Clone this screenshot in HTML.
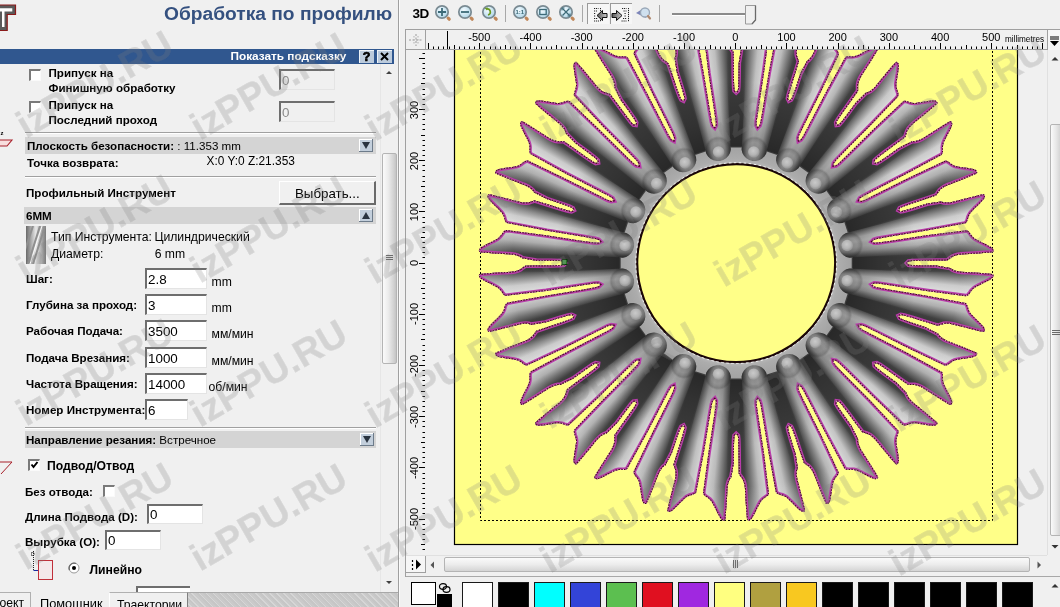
<!DOCTYPE html><html><head><meta charset="utf-8"><style>
html,body{margin:0;padding:0;width:1060px;height:607px;overflow:hidden;background:#f0f0f0;position:relative;font-family:"Liberation Sans",sans-serif;}
.t{position:absolute;white-space:nowrap;line-height:1;}
</style></head><body>
<svg style="position:absolute;left:0;top:0" width="20" height="34"><path d="M-2 5 H15.5 V14.5 H7.2 V30.5 H-2 Z" fill="#5a5a5a" stroke="#8a1a1a" stroke-width="1.2"/><path d="M-2 8.2 H12.3 V11.5 H4.5 V27 H2 V11.5 H-2 Z" fill="#fff"/></svg>
<div class="t" style="left:164px;top:4.2px;font-size:19.2px;font-weight:bold;color:#34507f;">Обработка по профилю</div>
<div style="position:absolute;left:0px;top:49px;width:394px;height:15px;background:#30578f"></div>
<div class="t" style="left:230.5px;top:51.3px;font-size:11.8px;font-weight:bold;color:#fff;">Показать подсказку</div>
<div style="position:absolute;left:359px;top:50px;width:15px;height:13px;background:#bccbdc;box-shadow:inset 1px 1px 0 #eef3f8"></div>
<div class="t" style="left:362.8px;top:50.9px;font-size:12.5px;font-weight:bold;color:#000;-webkit-text-stroke:0.7px #000">?</div>
<div style="position:absolute;left:377px;top:50px;width:15px;height:13px;background:#bccbdc;box-shadow:inset 1px 1px 0 #eef3f8"></div>
<svg style="position:absolute;left:377px;top:50px" width="15" height="13"><path d="M4 3 L11 10 M11 3 L4 10" stroke="#000" stroke-width="2"/></svg>
<div style="position:absolute;left:29px;top:69px;width:9px;height:9px;background:#fff;border-top:2px solid #7a7a7a;border-left:2px solid #7a7a7a;border-right:1px solid #fafafa;border-bottom:1px solid #fafafa;"></div>
<div class="t" style="left:48.5px;top:67.2px;font-size:11.6px;font-weight:bold;color:#000;">Припуск на</div>
<div class="t" style="left:48.5px;top:81.7px;font-size:11.6px;font-weight:bold;color:#000;">Финишную обработку</div>
<div style="position:absolute;left:279px;top:69px;width:53px;height:18px;background:#f0f0f0;border-top:2px solid #6e6e6e;border-left:2px solid #6e6e6e;border-right:1px solid #e4e4e4;border-bottom:1px solid #e4e4e4;"></div>
<div class="t" style="left:282px;top:73.7px;font-size:13.4px;font-weight:normal;color:#8a8a8a;">0</div>
<div style="position:absolute;left:29px;top:101px;width:9px;height:9px;background:#fff;border-top:2px solid #7a7a7a;border-left:2px solid #7a7a7a;border-right:1px solid #fafafa;border-bottom:1px solid #fafafa;"></div>
<div class="t" style="left:48.5px;top:99.2px;font-size:11.6px;font-weight:bold;color:#000;">Припуск на</div>
<div class="t" style="left:48.5px;top:114.2px;font-size:11.6px;font-weight:bold;color:#000;">Последний проход</div>
<div style="position:absolute;left:279px;top:101px;width:53px;height:18px;background:#f0f0f0;border-top:2px solid #6e6e6e;border-left:2px solid #6e6e6e;border-right:1px solid #e4e4e4;border-bottom:1px solid #e4e4e4;"></div>
<div class="t" style="left:282px;top:105.7px;font-size:13.4px;font-weight:normal;color:#8a8a8a;">0</div>
<div style="position:absolute;left:25px;top:132px;width:351px;height:1px;background:#a0a0a0;box-shadow:0 1px 0 #fff"></div>
<div style="position:absolute;left:25px;top:137px;width:351px;height:17px;background:#d4d4d4"></div>
<div class="t" style="left:27px;top:140.2px;font-size:11.6px;font-weight:bold;color:#000;">Плоскость безопасности: <span style="font-weight:normal">: 11.353 mm</span></div>
<div style="position:absolute;left:359px;top:139px;width:14px;height:13px;background:#c3cfdc;border-right:1px solid #6d7b8a;border-bottom:1px solid #6d7b8a;box-sizing:border-box;box-shadow:inset 1px 1px 0 #fff"></div>
<svg style="position:absolute;left:359px;top:139px" width="14" height="13"><path d="M3 3 L11 3 L7 10 Z" fill="#2a3440"/></svg>
<div class="t" style="left:27px;top:156.7px;font-size:11.6px;font-weight:bold;color:#000;">Точка возврата:</div>
<div class="t" style="left:206.5px;top:156.4px;font-size:11.9px;font-weight:normal;color:#000;">X:0 Y:0 Z:21.353</div>
<div style="position:absolute;left:25px;top:176px;width:351px;height:1px;background:#a0a0a0;box-shadow:0 1px 0 #fff"></div>
<div class="t" style="left:26px;top:187.2px;font-size:11.6px;font-weight:bold;color:#000;">Профильный Инструмент</div>
<div style="position:absolute;left:279px;top:181px;width:97px;height:24px;background:#f0f0f0;border-top:1px solid #fff;border-left:1px solid #fff;border-right:2px solid #6a6a6a;border-bottom:2px solid #6a6a6a;box-sizing:border-box"></div>
<div class="t" style="left:295px;top:187.2px;font-size:13.3px;font-weight:normal;color:#000;">Выбрать...</div>
<div style="position:absolute;left:24px;top:207px;width:352px;height:17px;background:#d4d4d4"></div>
<div class="t" style="left:26px;top:209.9px;font-size:11.6px;font-weight:bold;color:#000;">6MM</div>
<div style="position:absolute;left:359px;top:209px;width:14px;height:13px;background:#c3cfdc;border-right:1px solid #6d7b8a;border-bottom:1px solid #6d7b8a;box-sizing:border-box;box-shadow:inset 1px 1px 0 #fff"></div>
<svg style="position:absolute;left:359px;top:209px" width="14" height="13"><path d="M3 10 L7 3 L11 10 Z" fill="#2a3440"/></svg>
<svg style="position:absolute;left:26px;top:226px" width="20" height="38"><defs><linearGradient id="tg" x1="0" x2="1"><stop offset="0" stop-color="#6a6a6a"/><stop offset="0.5" stop-color="#e8e8e8"/><stop offset="1" stop-color="#7a7a7a"/></linearGradient></defs><rect width="20" height="38" fill="url(#tg)"/><path d="M2 38 L14 0 M7 38 L19 0 M-3 30 L7 0" stroke="#909090" stroke-width="2"/><path d="M4 38 L16 0" stroke="#fafafa" stroke-width="1"/></svg>
<div class="t" style="left:51px;top:230.5px;font-size:12.2px;font-weight:normal;color:#000;">Тип Инструмента:</div>
<div class="t" style="left:154.4px;top:230.5px;font-size:12.2px;font-weight:normal;color:#000;">Цилиндрический</div>
<div class="t" style="left:51px;top:247.5px;font-size:12.2px;font-weight:normal;color:#000;">Диаметр:</div>
<div class="t" style="left:154.7px;top:247.5px;font-size:12.2px;font-weight:normal;color:#000;">6 mm</div>
<div class="t" style="left:26px;top:273.2px;font-size:11.6px;font-weight:bold;color:#000;">Шаг:</div>
<div style="position:absolute;left:145px;top:268px;width:59px;height:18px;background:#fff;border-top:2px solid #6e6e6e;border-left:2px solid #6e6e6e;border-right:1px solid #e4e4e4;border-bottom:1px solid #e4e4e4;"></div>
<div class="t" style="left:148px;top:272.7px;font-size:13.4px;font-weight:normal;color:#000;">2.8</div>
<div class="t" style="left:211.5px;top:275.7px;font-size:12.2px;font-weight:normal;color:#000;">mm</div>
<div class="t" style="left:26px;top:299.2px;font-size:11.6px;font-weight:bold;color:#000;">Глубина за проход:</div>
<div style="position:absolute;left:145px;top:294px;width:59px;height:18px;background:#fff;border-top:2px solid #6e6e6e;border-left:2px solid #6e6e6e;border-right:1px solid #e4e4e4;border-bottom:1px solid #e4e4e4;"></div>
<div class="t" style="left:148px;top:298.7px;font-size:13.4px;font-weight:normal;color:#000;">3</div>
<div class="t" style="left:211.5px;top:301.7px;font-size:12.2px;font-weight:normal;color:#000;">mm</div>
<div class="t" style="left:26px;top:325.2px;font-size:11.6px;font-weight:bold;color:#000;">Рабочая Подача:</div>
<div style="position:absolute;left:145px;top:320px;width:59px;height:18px;background:#fff;border-top:2px solid #6e6e6e;border-left:2px solid #6e6e6e;border-right:1px solid #e4e4e4;border-bottom:1px solid #e4e4e4;"></div>
<div class="t" style="left:148px;top:324.7px;font-size:13.4px;font-weight:normal;color:#000;">3500</div>
<div class="t" style="left:211.5px;top:327.7px;font-size:12.2px;font-weight:normal;color:#000;">мм/мин</div>
<div class="t" style="left:26px;top:352.2px;font-size:11.6px;font-weight:bold;color:#000;">Подача Врезания:</div>
<div style="position:absolute;left:145px;top:347px;width:59px;height:18px;background:#fff;border-top:2px solid #6e6e6e;border-left:2px solid #6e6e6e;border-right:1px solid #e4e4e4;border-bottom:1px solid #e4e4e4;"></div>
<div class="t" style="left:148px;top:351.7px;font-size:13.4px;font-weight:normal;color:#000;">1000</div>
<div class="t" style="left:211.5px;top:354.7px;font-size:12.2px;font-weight:normal;color:#000;">мм/мин</div>
<div class="t" style="left:26px;top:378.2px;font-size:11.6px;font-weight:bold;color:#000;">Частота Вращения:</div>
<div style="position:absolute;left:145px;top:373px;width:59px;height:18px;background:#fff;border-top:2px solid #6e6e6e;border-left:2px solid #6e6e6e;border-right:1px solid #e4e4e4;border-bottom:1px solid #e4e4e4;"></div>
<div class="t" style="left:148px;top:377.7px;font-size:13.4px;font-weight:normal;color:#000;">14000</div>
<div class="t" style="left:208.5px;top:380.7px;font-size:12.2px;font-weight:normal;color:#000;">об/мин</div>
<div class="t" style="left:26px;top:404.2px;font-size:11.6px;font-weight:bold;color:#000;">Номер Инструмента:</div>
<div style="position:absolute;left:145px;top:399px;width:40px;height:18px;background:#fff;border-top:2px solid #6e6e6e;border-left:2px solid #6e6e6e;border-right:1px solid #e4e4e4;border-bottom:1px solid #e4e4e4;"></div>
<div class="t" style="left:148px;top:403.7px;font-size:13.4px;font-weight:normal;color:#000;">6</div>
<div style="position:absolute;left:25px;top:427px;width:351px;height:1px;background:#a0a0a0;box-shadow:0 1px 0 #fff"></div>
<div style="position:absolute;left:25px;top:431px;width:351px;height:17px;background:#d4d4d4"></div>
<div class="t" style="left:26px;top:433.7px;font-size:11.6px;font-weight:bold;color:#000;">Направление резания: <span style="font-weight:normal">Встречное</span></div>
<div style="position:absolute;left:360px;top:433px;width:14px;height:13px;background:#c3cfdc;border-right:1px solid #6d7b8a;border-bottom:1px solid #6d7b8a;box-sizing:border-box;box-shadow:inset 1px 1px 0 #fff"></div>
<svg style="position:absolute;left:360px;top:433px" width="14" height="13"><path d="M3 3 L11 3 L7 10 Z" fill="#2a3440"/></svg>
<div style="position:absolute;left:28px;top:459px;width:9px;height:9px;background:#fff;border-top:2px solid #7a7a7a;border-left:2px solid #7a7a7a;border-right:1px solid #fafafa;border-bottom:1px solid #fafafa;"></div>
<svg style="position:absolute;left:28px;top:459px" width="12" height="12"><path d="M3.5 5.5 L5.5 8 L9.5 3" stroke="#000" stroke-width="2" fill="none"/></svg>
<div class="t" style="left:47px;top:459.7px;font-size:12.2px;font-weight:bold;color:#000;">Подвод/Отвод</div>
<div class="t" style="left:25px;top:485.7px;font-size:11.6px;font-weight:bold;color:#000;">Без отвода:</div>
<div style="position:absolute;left:103px;top:485px;width:9px;height:9px;background:#fff;border-top:2px solid #7a7a7a;border-left:2px solid #7a7a7a;border-right:1px solid #fafafa;border-bottom:1px solid #fafafa;"></div>
<div class="t" style="left:25px;top:511.2px;font-size:11.6px;font-weight:bold;color:#000;">Длина Подвода (D):</div>
<div style="position:absolute;left:147px;top:504px;width:53px;height:17px;background:#fff;border-top:2px solid #6e6e6e;border-left:2px solid #6e6e6e;border-right:1px solid #e4e4e4;border-bottom:1px solid #e4e4e4;"></div>
<div class="t" style="left:150px;top:507.7px;font-size:13.4px;font-weight:normal;color:#000;">0</div>
<div class="t" style="left:25px;top:536.2px;font-size:11.6px;font-weight:bold;color:#000;">Вырубка (O):</div>
<div style="position:absolute;left:105px;top:530px;width:53px;height:17px;background:#fff;border-top:2px solid #6e6e6e;border-left:2px solid #6e6e6e;border-right:1px solid #e4e4e4;border-bottom:1px solid #e4e4e4;"></div>
<div class="t" style="left:108px;top:533.7px;font-size:13.4px;font-weight:normal;color:#000;">0</div>
<svg style="position:absolute;left:28px;top:550px" width="28" height="32"><path d="M5.5 1 V20" stroke="#222" stroke-width="1" stroke-dasharray="1 1" fill="none"/><path d="M5.5 20.5 H11" stroke="#1a2aa0" stroke-width="1"/><rect x="10.5" y="10.5" width="14" height="19" fill="#f4e8ea" stroke="#c0303a" stroke-width="1"/><text x="3" y="6" font-size="5" font-family="Liberation Sans">D</text></svg>
<svg style="position:absolute;left:68px;top:562px" width="12" height="12"><circle cx="6" cy="6" r="5" fill="#fff" stroke="#9a9a9a" stroke-width="1"/><path d="M1.5 8 A5 5 0 0 1 8 1.5" stroke="#6a6a6a" stroke-width="1.3" fill="none"/><circle cx="6" cy="6" r="2" fill="#000"/></svg>
<div class="t" style="left:89.5px;top:563.7px;font-size:12.2px;font-weight:bold;color:#000;">Линейно</div>
<div style="position:absolute;left:136px;top:586px;width:54px;height:6px;background:#fff;border-top:2px solid #6e6e6e;border-left:2px solid #6e6e6e;box-sizing:border-box"></div>
<div class="t" style="left:0.5px;top:130.4px;font-size:6px;font-weight:bold;color:#000;">z</div>
<svg style="position:absolute;left:0;top:138px" width="14" height="10"><path d="M-2 2 H12 L7 8 H-2 Z" fill="#f8dede" stroke="#a8202a" stroke-width="1.1"/></svg>
<svg style="position:absolute;left:0;top:460px" width="14" height="16"><path d="M-2 2 H12 L1 14" fill="none" stroke="#a8202a" stroke-width="1"/></svg>
<div style="position:absolute;left:380px;top:64px;width:1px;height:528px;background:#e6e6e6"></div>
<div style="position:absolute;left:381px;top:64px;width:17px;height:528px;background:#f0f0f0"></div>
<svg style="position:absolute;left:383px;top:68px" width="12" height="10"><path d="M3 6 L6 3 L9 6 Z" fill="#404040"/></svg>
<svg style="position:absolute;left:383px;top:578px" width="12" height="10"><path d="M3 3 L9 3 L6 6 Z" fill="#404040"/></svg>
<div style="position:absolute;left:382px;top:153px;width:15px;height:211px;background:linear-gradient(90deg,#fafafa 0%,#ececec 40%,#d0d0d0 85%,#c4c4c4 100%);border:1px solid #b4b4b4;box-sizing:border-box;border-radius:2px"></div>
<svg style="position:absolute;left:385px;top:254px" width="10" height="8"><path d="M1 1.5 H8 M1 3.5 H8 M1 5.5 H8" stroke="#6a6a6a" stroke-width="1"/></svg>
<div style="position:absolute;left:188px;top:592px;width:210px;height:15px;background:repeating-linear-gradient(45deg,#c6c6c6 0 2px,#d6d6d6 2px 3px,#cacaca 3px 5px);border-top:1px solid #a8a8a8;box-sizing:border-box"></div>
<div style="position:absolute;left:0px;top:592px;width:31px;height:15px;background:#f0f0f0;border-top:1px solid #b0b0b0;border-right:1px solid #b0b0b0;box-sizing:border-box"></div>
<div class="t" style="left:-0.5px;top:596.7px;font-size:12.2px;font-weight:normal;color:#000;">оект</div>
<div class="t" style="left:40px;top:598.2px;font-size:12.8px;font-weight:normal;color:#000;">Помощник</div>
<div style="position:absolute;left:109px;top:592px;width:79px;height:15px;background:#f0f0f0;border-top:1px solid #b0b0b0;border-left:1px solid #fff;border-right:1px solid #808080;box-sizing:border-box"></div>
<div class="t" style="left:117px;top:598.7px;font-size:12.2px;font-weight:normal;color:#000;">Траектории</div>
<div style="position:absolute;left:398px;top:0px;width:1px;height:607px;background:#a0a0a0"></div>
<div style="position:absolute;left:399px;top:0px;width:1px;height:607px;background:#fbfbfb"></div>
<div class="t" style="left:412.5px;top:6.6px;font-size:13.5px;font-weight:bold;color:#000;letter-spacing:-0.5px">3D</div>
<svg style="position:absolute;left:433px;top:3px" width="20" height="20" viewBox="-9 -9 20 20"><defs><radialGradient id="mg442" cx="0.4" cy="0.35" r="0.7"><stop offset="0" stop-color="#f4fbff"/><stop offset="1" stop-color="#a9d3e6"/></radialGradient></defs><circle cx="0" cy="0" r="6.2" fill="url(#mg442)" stroke="#7a8a92" stroke-width="1.7"/><path d="M6.2 6.2 L7.2 7.2" stroke="#c0875a" stroke-width="3.2" stroke-linecap="round"/><path d="M-4 0 H4 M0 -4 V4" stroke="#3c6a78" stroke-width="1.8"/></svg>
<svg style="position:absolute;left:456px;top:3px" width="20" height="20" viewBox="-9 -9 20 20"><defs><radialGradient id="mg465" cx="0.4" cy="0.35" r="0.7"><stop offset="0" stop-color="#f4fbff"/><stop offset="1" stop-color="#a9d3e6"/></radialGradient></defs><circle cx="0" cy="0" r="6.2" fill="url(#mg465)" stroke="#7a8a92" stroke-width="1.7"/><path d="M6.2 6.2 L7.2 7.2" stroke="#c0875a" stroke-width="3.2" stroke-linecap="round"/><path d="M-4 0 H4" stroke="#3c6a78" stroke-width="1.8"/></svg>
<svg style="position:absolute;left:479.5px;top:3px" width="20" height="20" viewBox="-9 -9 20 20"><defs><radialGradient id="mg488.5" cx="0.4" cy="0.35" r="0.7"><stop offset="0" stop-color="#f4fbff"/><stop offset="1" stop-color="#a9d3e6"/></radialGradient></defs><circle cx="0" cy="0" r="6.2" fill="url(#mg488.5)" stroke="#7a8a92" stroke-width="1.7"/><path d="M6.2 6.2 L7.2 7.2" stroke="#c0875a" stroke-width="3.2" stroke-linecap="round"/><path d="M-2.5 -3 A3 3 0 1 1 -1 3" stroke="#6a9a20" stroke-width="1.6" fill="none"/><path d="M-4.5 -4 L-2 -1.5 L-1 -4.5 Z" fill="#6a9a20"/></svg>
<div style="position:absolute;left:505px;top:5px;width:1px;height:17px;background:#a8a8a8"></div>
<svg style="position:absolute;left:510.5px;top:3px" width="20" height="20" viewBox="-9 -9 20 20"><defs><radialGradient id="mg519.5" cx="0.4" cy="0.35" r="0.7"><stop offset="0" stop-color="#f4fbff"/><stop offset="1" stop-color="#a9d3e6"/></radialGradient></defs><circle cx="0" cy="0" r="6.2" fill="url(#mg519.5)" stroke="#7a8a92" stroke-width="1.7"/><path d="M6.2 6.2 L7.2 7.2" stroke="#c0875a" stroke-width="3.2" stroke-linecap="round"/><text x="-4.6" y="2.2" font-size="6" font-family="Liberation Sans" font-weight="bold" fill="#3c6a78">1:1</text></svg>
<svg style="position:absolute;left:533.5px;top:3px" width="20" height="20" viewBox="-9 -9 20 20"><defs><radialGradient id="mg542.5" cx="0.4" cy="0.35" r="0.7"><stop offset="0" stop-color="#f4fbff"/><stop offset="1" stop-color="#a9d3e6"/></radialGradient></defs><circle cx="0" cy="0" r="6.2" fill="url(#mg542.5)" stroke="#7a8a92" stroke-width="1.7"/><path d="M6.2 6.2 L7.2 7.2" stroke="#c0875a" stroke-width="3.2" stroke-linecap="round"/><rect x="-3.2" y="-2.5" width="6.4" height="5" fill="none" stroke="#3c6a78" stroke-width="1.3"/></svg>
<svg style="position:absolute;left:556.5px;top:3px" width="20" height="20" viewBox="-9 -9 20 20"><defs><radialGradient id="mg565.5" cx="0.4" cy="0.35" r="0.7"><stop offset="0" stop-color="#f4fbff"/><stop offset="1" stop-color="#a9d3e6"/></radialGradient></defs><circle cx="0" cy="0" r="6.2" fill="url(#mg565.5)" stroke="#7a8a92" stroke-width="1.7"/><path d="M6.2 6.2 L7.2 7.2" stroke="#c0875a" stroke-width="3.2" stroke-linecap="round"/><path d="M-3.5 -3.5 L3.5 3.5 M3.5 -3.5 L-3.5 3.5" stroke="#3c6a78" stroke-width="1.3"/><path d="M-4 -4 h2.5 M-4 -4 v2.5 M4 4 h-2.5 M4 4 v-2.5" stroke="#3c6a78" stroke-width="1"/></svg>
<div style="position:absolute;left:582px;top:5px;width:1px;height:17px;background:#a8a8a8"></div>
<div style="position:absolute;left:587px;top:3px;width:22px;height:21px;background:#f6f6f6;border-top:1px solid #9a9a9a;border-left:1px solid #9a9a9a;box-sizing:border-box"></div>
<div style="position:absolute;left:610px;top:3px;width:22px;height:21px;background:#f6f6f6;border-top:1px solid #9a9a9a;border-left:1px solid #9a9a9a;box-sizing:border-box"></div>
<svg style="position:absolute;left:587px;top:3px" width="22" height="21"><defs><linearGradient id="arw" x1="0" x2="1"><stop offset="0" stop-color="#555"/><stop offset="1" stop-color="#ccc"/></linearGradient></defs><path d="M7 5.5h4.5 M7 8h3 M7 10.5h2 M7 13h2 M7 15.5h3.5 M7 18h5 M13.5 5 V18.5" stroke="#222" stroke-width="1" stroke-dasharray="1.2 0.8"/><path d="M20 10.5 H15.5 V7.5 L10 12.5 L15.5 17.5 V14.5 H20 Z" fill="url(#arw)" stroke="#111" stroke-width="1"/></svg>
<svg style="position:absolute;left:610px;top:3px" width="22" height="21"><path d="M12 5.5h4.5 M13.5 8h3 M14.5 10.5h2 M14.5 13h2 M13 15.5h3.5 M11.5 18h5 M18.5 5 V18.5" stroke="#222" stroke-width="1" stroke-dasharray="1.2 0.8"/><path d="M2 10.5 H6.5 V7.5 L12 12.5 L6.5 17.5 V14.5 H2 Z" fill="url(#arw)" stroke="#111" stroke-width="1"/></svg>
<svg style="position:absolute;left:634px;top:3px" width="20" height="20"><path d="M2 10 L10 5 L12 15 Z" fill="#7c84b8"/><circle cx="11" cy="9.5" r="4.5" fill="#cfe0ee" stroke="#9aa8b8" stroke-width="1.3"/><path d="M14 13 L16 15.5" stroke="#b08a70" stroke-width="2.2" stroke-linecap="round"/></svg>
<div style="position:absolute;left:659px;top:5px;width:1px;height:17px;background:#a8a8a8"></div>
<div style="position:absolute;left:672px;top:13px;width:74px;height:3px;background:#8a8a8a;border-bottom:1px solid #fff;box-sizing:content-box;height:2px"></div>
<svg style="position:absolute;left:744px;top:4px" width="14" height="22"><path d="M1.5 1.5 H11.5 V16 L8 20 L1.5 20 Z" fill="#f0f0f0" stroke="#9a9a9a" stroke-width="1"/><path d="M11.5 1.5 V16 L8 20" stroke="#6a6a6a" stroke-width="1.3" fill="none"/></svg>
<div style="position:absolute;left:405px;top:29px;width:655px;height:1px;background:#a0a0a0"></div>
<div style="position:absolute;left:405px;top:29px;width:1px;height:548px;background:#a0a0a0"></div>
<svg style="position:absolute;left:406px;top:30px" width="19" height="19"><path d="M3 10 H16 M10 4 V16" stroke="#9a9a9a" stroke-width="1" stroke-dasharray="2 1.5"/><path d="M8 6 V14 M12 6 V14" stroke="#b0b0b0" stroke-width="1" stroke-dasharray="1.5 1.5"/></svg>
<div style="position:absolute;left:425px;top:30px;width:1px;height:20px;background:#a0a0a0"></div>
<div style="position:absolute;left:406px;top:49px;width:641px;height:1px;background:#a0a0a0"></div>
<div style="position:absolute;left:426px;top:50px;width:621px;height:505px;background:#f0f0f0"></div>
<svg style="position:absolute;left:0;top:0" width="1060" height="607"><path d="M428.5 43 V49 M433.5 46.5 V49 M438.5 46.5 V49 M443.5 46.5 V49 M449.5 46.5 V49 M454.5 45 V49 M459.5 46.5 V49 M464.5 46.5 V49 M469.5 46.5 V49 M474.5 46.5 V49 M479.5 43 V49 M484.5 46.5 V49 M490.5 46.5 V49 M495.5 46.5 V49 M500.5 46.5 V49 M505.5 45 V49 M510.5 46.5 V49 M515.5 46.5 V49 M520.5 46.5 V49 M525.5 46.5 V49 M530.5 43 V49 M536.5 46.5 V49 M541.5 46.5 V49 M546.5 46.5 V49 M551.5 46.5 V49 M556.5 45 V49 M561.5 46.5 V49 M566.5 46.5 V49 M571.5 46.5 V49 M577.5 46.5 V49 M582.5 43 V49 M587.5 46.5 V49 M592.5 46.5 V49 M597.5 46.5 V49 M602.5 46.5 V49 M607.5 45 V49 M612.5 46.5 V49 M618.5 46.5 V49 M623.5 46.5 V49 M628.5 46.5 V49 M633.5 43 V49 M638.5 46.5 V49 M643.5 46.5 V49 M648.5 46.5 V49 M653.5 46.5 V49 M658.5 45 V49 M664.5 46.5 V49 M669.5 46.5 V49 M674.5 46.5 V49 M679.5 46.5 V49 M684.5 43 V49 M689.5 46.5 V49 M694.5 46.5 V49 M699.5 46.5 V49 M705.5 46.5 V49 M710.5 45 V49 M715.5 46.5 V49 M720.5 46.5 V49 M725.5 46.5 V49 M730.5 46.5 V49 M735.5 43 V49 M740.5 46.5 V49 M746.5 46.5 V49 M751.5 46.5 V49 M756.5 46.5 V49 M761.5 45 V49 M766.5 46.5 V49 M771.5 46.5 V49 M776.5 46.5 V49 M781.5 46.5 V49 M786.5 43 V49 M792.5 46.5 V49 M797.5 46.5 V49 M802.5 46.5 V49 M807.5 46.5 V49 M812.5 45 V49 M817.5 46.5 V49 M822.5 46.5 V49 M827.5 46.5 V49 M833.5 46.5 V49 M838.5 43 V49 M843.5 46.5 V49 M848.5 46.5 V49 M853.5 46.5 V49 M858.5 46.5 V49 M863.5 45 V49 M868.5 46.5 V49 M874.5 46.5 V49 M879.5 46.5 V49 M884.5 46.5 V49 M889.5 43 V49 M894.5 46.5 V49 M899.5 46.5 V49 M904.5 46.5 V49 M909.5 46.5 V49 M914.5 45 V49 M920.5 46.5 V49 M925.5 46.5 V49 M930.5 46.5 V49 M935.5 46.5 V49 M940.5 43 V49 M945.5 46.5 V49 M950.5 46.5 V49 M955.5 46.5 V49 M961.5 46.5 V49 M966.5 45 V49 M971.5 46.5 V49 M976.5 46.5 V49 M981.5 46.5 V49 M986.5 46.5 V49 M991.5 43 V49 M996.5 46.5 V49 M1002.5 46.5 V49 M1007.5 46.5 V49 M1012.5 46.5 V49 M1017.5 45 V49 M1022.5 46.5 V49 M1027.5 46.5 V49 M1032.5 46.5 V49 M1037.5 46.5 V49 M1042.5 43 V49" stroke="#000" stroke-width="1"/><path d="M447.5 31 V49" stroke="#000" stroke-width="1"/><path d="M422.5 549.5 H425 M421 544.5 H425 M422.5 539.5 H425 M422.5 534.5 H425 M422.5 529.5 H425 M422.5 524.5 H425 M419 519.5 H425 M422.5 513.5 H425 M422.5 508.5 H425 M422.5 503.5 H425 M422.5 498.5 H425 M421 493.5 H425 M422.5 488.5 H425 M422.5 483.5 H425 M422.5 478.5 H425 M422.5 473.5 H425 M419 467.5 H425 M422.5 462.5 H425 M422.5 457.5 H425 M422.5 452.5 H425 M422.5 447.5 H425 M421 442.5 H425 M422.5 437.5 H425 M422.5 432.5 H425 M422.5 426.5 H425 M422.5 421.5 H425 M419 416.5 H425 M422.5 411.5 H425 M422.5 406.5 H425 M422.5 401.5 H425 M422.5 396.5 H425 M421 391.5 H425 M422.5 385.5 H425 M422.5 380.5 H425 M422.5 375.5 H425 M422.5 370.5 H425 M419 365.5 H425 M422.5 360.5 H425 M422.5 355.5 H425 M422.5 350.5 H425 M422.5 345.5 H425 M421 339.5 H425 M422.5 334.5 H425 M422.5 329.5 H425 M422.5 324.5 H425 M422.5 319.5 H425 M419 314.5 H425 M422.5 309.5 H425 M422.5 304.5 H425 M422.5 298.5 H425 M422.5 293.5 H425 M421 288.5 H425 M422.5 283.5 H425 M422.5 278.5 H425 M422.5 273.5 H425 M422.5 268.5 H425 M419 263.5 H425 M422.5 257.5 H425 M422.5 252.5 H425 M422.5 247.5 H425 M422.5 242.5 H425 M421 237.5 H425 M422.5 232.5 H425 M422.5 227.5 H425 M422.5 222.5 H425 M422.5 217.5 H425 M419 211.5 H425 M422.5 206.5 H425 M422.5 201.5 H425 M422.5 196.5 H425 M422.5 191.5 H425 M421 186.5 H425 M422.5 181.5 H425 M422.5 176.5 H425 M422.5 170.5 H425 M422.5 165.5 H425 M419 160.5 H425 M422.5 155.5 H425 M422.5 150.5 H425 M422.5 145.5 H425 M422.5 140.5 H425 M421 135.5 H425 M422.5 129.5 H425 M422.5 124.5 H425 M422.5 119.5 H425 M422.5 114.5 H425 M419 109.5 H425 M422.5 104.5 H425 M422.5 99.5 H425 M422.5 94.5 H425 M422.5 89.5 H425 M421 83.5 H425 M422.5 78.5 H425 M422.5 73.5 H425 M422.5 68.5 H425 M422.5 63.5 H425 M419 58.5 H425 M422.5 53.5 H425" stroke="#000" stroke-width="1"/></svg>
<div class="t" style="left:449.29999999999995px;top:32px;width:60px;text-align:center;font-size:11px;color:#000">-500</div>
<div class="t" style="left:500.5px;top:32px;width:60px;text-align:center;font-size:11px;color:#000">-400</div>
<div class="t" style="left:551.6999999999999px;top:32px;width:60px;text-align:center;font-size:11px;color:#000">-300</div>
<div class="t" style="left:602.9px;top:32px;width:60px;text-align:center;font-size:11px;color:#000">-200</div>
<div class="t" style="left:654.0999999999999px;top:32px;width:60px;text-align:center;font-size:11px;color:#000">-100</div>
<div class="t" style="left:705.3px;top:32px;width:60px;text-align:center;font-size:11px;color:#000">0</div>
<div class="t" style="left:756.5px;top:32px;width:60px;text-align:center;font-size:11px;color:#000">100</div>
<div class="t" style="left:807.6999999999999px;top:32px;width:60px;text-align:center;font-size:11px;color:#000">200</div>
<div class="t" style="left:858.9px;top:32px;width:60px;text-align:center;font-size:11px;color:#000">300</div>
<div class="t" style="left:910.0999999999999px;top:32px;width:60px;text-align:center;font-size:11px;color:#000">400</div>
<div class="t" style="left:961.3px;top:32px;width:60px;text-align:center;font-size:11px;color:#000">500</div>
<div class="t" style="left:1005px;top:33.5px;font-size:9.5px;color:#000;transform:scaleX(0.86);transform-origin:0 0">millimetres</div>
<div class="t" style="left:385px;top:513.1px;width:60px;height:12px;text-align:center;font-size:11px;color:#000;transform:rotate(-90deg);transform-origin:30px 6px">-500</div>
<div class="t" style="left:385px;top:461.90000000000003px;width:60px;height:12px;text-align:center;font-size:11px;color:#000;transform:rotate(-90deg);transform-origin:30px 6px">-400</div>
<div class="t" style="left:385px;top:410.70000000000005px;width:60px;height:12px;text-align:center;font-size:11px;color:#000;transform:rotate(-90deg);transform-origin:30px 6px">-300</div>
<div class="t" style="left:385px;top:359.5px;width:60px;height:12px;text-align:center;font-size:11px;color:#000;transform:rotate(-90deg);transform-origin:30px 6px">-200</div>
<div class="t" style="left:385px;top:308.3px;width:60px;height:12px;text-align:center;font-size:11px;color:#000;transform:rotate(-90deg);transform-origin:30px 6px">-100</div>
<div class="t" style="left:385px;top:257.1px;width:60px;height:12px;text-align:center;font-size:11px;color:#000;transform:rotate(-90deg);transform-origin:30px 6px">0</div>
<div class="t" style="left:385px;top:205.90000000000003px;width:60px;height:12px;text-align:center;font-size:11px;color:#000;transform:rotate(-90deg);transform-origin:30px 6px">100</div>
<div class="t" style="left:385px;top:154.70000000000002px;width:60px;height:12px;text-align:center;font-size:11px;color:#000;transform:rotate(-90deg);transform-origin:30px 6px">200</div>
<div class="t" style="left:385px;top:103.50000000000003px;width:60px;height:12px;text-align:center;font-size:11px;color:#000;transform:rotate(-90deg);transform-origin:30px 6px">300</div>
<div style="position:absolute;left:1047px;top:30px;width:13px;height:20px;background:#f6f6f6;border-left:1px solid #a0a0a0;box-sizing:border-box"></div>
<svg style="position:absolute;left:1048px;top:30px" width="12" height="20"><path d="M2 7 H11 M2 9 H11" stroke="#000" stroke-width="1"/><path d="M2 11 H11 L6.5 16 Z" fill="#000"/></svg>
<div style="position:absolute;left:1047px;top:50px;width:13px;height:505px;background:#f0f0f0;border-left:1px solid #e0e0e0;box-sizing:border-box"></div>
<svg style="position:absolute;left:1050px;top:54px" width="10" height="10"><path d="M1.5 6.5 L5 3 L8.5 6.5 Z" fill="#333"/></svg>
<svg style="position:absolute;left:1050px;top:542px" width="10" height="10"><path d="M1.5 3 L8.5 3 L5 6.5 Z" fill="#333"/></svg>
<div style="position:absolute;left:1050px;top:124px;width:12px;height:412px;background:linear-gradient(90deg,#fafafa,#e8e8e8 50%,#d0d0d0);border:1px solid #b4b4b4;box-sizing:border-box;border-radius:2px"></div>
<svg style="position:absolute;left:1052px;top:329px" width="8" height="8"><path d="M0 1.5 H8 M0 3.5 H8 M0 5.5 H8" stroke="#6a6a6a" stroke-width="1"/></svg>
<div style="position:absolute;left:406px;top:555px;width:641px;height:1px;background:#e0e0e0"></div>
<div style="position:absolute;left:406px;top:556px;width:20px;height:17px;background:#f6f6f6;border-right:1px solid #a0a0a0;border-bottom:1px solid #a0a0a0;box-sizing:border-box"></div>
<svg style="position:absolute;left:406px;top:556px" width="20" height="17"><path d="M6.5 4 V6 M6.5 8 V10 M6.5 12 V14" stroke="#000" stroke-width="1.2"/><path d="M10 3.5 L15 8.5 L10 13.5 Z" fill="#000"/></svg>
<svg style="position:absolute;left:428px;top:559px" width="10" height="12"><path d="M6 2.5 V9.5 L2.5 6 Z" fill="#555"/></svg>
<div style="position:absolute;left:444px;top:557px;width:586px;height:15px;background:linear-gradient(180deg,#fafafa,#ececec 50%,#d4d4d4);border:1px solid #b4b4b4;box-sizing:border-box;border-radius:2px"></div>
<svg style="position:absolute;left:732px;top:560px" width="8" height="9"><path d="M1.5 0 V8 M3.5 0 V8 M5.5 0 V8" stroke="#6a6a6a" stroke-width="1"/></svg>
<svg style="position:absolute;left:1034px;top:559px" width="10" height="12"><path d="M3.5 2.5 V9.5 L7 6 Z" fill="#555"/></svg>
<div style="position:absolute;left:406px;top:576px;width:654px;height:1px;background:#a8a8a8"></div>
<div style="position:absolute;left:406px;top:577px;width:654px;height:30px;background:#f0f0f0"></div>
<div style="position:absolute;left:437px;top:594px;width:15px;height:13px;background:#000"></div>
<div style="position:absolute;left:411px;top:582px;width:25px;height:23px;background:#fff;border:1px solid #000;box-sizing:border-box"></div>
<svg style="position:absolute;left:438px;top:582px" width="14" height="12"><ellipse cx="5" cy="4.5" rx="3.5" ry="2.8" fill="none" stroke="#000" stroke-width="1.2"/><ellipse cx="8.5" cy="7.5" rx="3.5" ry="2.8" fill="none" stroke="#000" stroke-width="1.2"/></svg>
<div style="position:absolute;left:462px;top:582px;width:31px;height:26px;background:#ffffff;border:1px solid #1a1a1a;box-sizing:border-box"></div>
<div style="position:absolute;left:498px;top:582px;width:31px;height:26px;background:#000000;border:1px solid #1a1a1a;box-sizing:border-box"></div>
<div style="position:absolute;left:534px;top:582px;width:31px;height:26px;background:#00ffff;border:1px solid #1a1a1a;box-sizing:border-box"></div>
<div style="position:absolute;left:570px;top:582px;width:31px;height:26px;background:#3344d8;border:1px solid #1a1a1a;box-sizing:border-box"></div>
<div style="position:absolute;left:606px;top:582px;width:31px;height:26px;background:#5cbf50;border:1px solid #1a1a1a;box-sizing:border-box"></div>
<div style="position:absolute;left:642px;top:582px;width:31px;height:26px;background:#e01020;border:1px solid #1a1a1a;box-sizing:border-box"></div>
<div style="position:absolute;left:678px;top:582px;width:31px;height:26px;background:#a028e0;border:1px solid #1a1a1a;box-sizing:border-box"></div>
<div style="position:absolute;left:714px;top:582px;width:31px;height:26px;background:#ffff80;border:1px solid #1a1a1a;box-sizing:border-box"></div>
<div style="position:absolute;left:750px;top:582px;width:31px;height:26px;background:#b0a040;border:1px solid #1a1a1a;box-sizing:border-box"></div>
<div style="position:absolute;left:786px;top:582px;width:31px;height:26px;background:#f8c820;border:1px solid #1a1a1a;box-sizing:border-box"></div>
<div style="position:absolute;left:822px;top:582px;width:31px;height:26px;background:#000000;border:1px solid #1a1a1a;box-sizing:border-box"></div>
<div style="position:absolute;left:858px;top:582px;width:31px;height:26px;background:#000000;border:1px solid #1a1a1a;box-sizing:border-box"></div>
<div style="position:absolute;left:894px;top:582px;width:31px;height:26px;background:#000000;border:1px solid #1a1a1a;box-sizing:border-box"></div>
<div style="position:absolute;left:930px;top:582px;width:31px;height:26px;background:#000000;border:1px solid #1a1a1a;box-sizing:border-box"></div>
<div style="position:absolute;left:966px;top:582px;width:31px;height:26px;background:#000000;border:1px solid #1a1a1a;box-sizing:border-box"></div>
<div style="position:absolute;left:1002px;top:582px;width:31px;height:26px;background:#000000;border:1px solid #1a1a1a;box-sizing:border-box"></div>
<div style="position:absolute;left:1047px;top:577px;width:13px;height:30px;background:#f0f0f0"></div>
<svg style="position:absolute;left:1050px;top:581px" width="10" height="10"><path d="M1.5 6.5 L5 3 L8.5 6.5 Z" fill="#333"/></svg>
<div style="position:absolute;left:426px;top:50px;width:621px;height:505px;overflow:hidden">
<svg style="position:absolute;left:-426px;top:-50px" width="1060" height="607">
<rect x="454.5" y="20" width="563" height="524.5" fill="#ffff88" stroke="#000" stroke-width="1.2"/>
<path d="M480.5 0 V520.5 H992.5 V0" fill="none" stroke="#000" stroke-width="1" stroke-dasharray="2 2"/>
<defs><radialGradient id="ring" gradientUnits="userSpaceOnUse" cx="736.2" cy="263.1" r="135"><stop offset="0.73" stop-color="#bcbcbc"/><stop offset="0.77" stop-color="#acacac"/><stop offset="0.86" stop-color="#a2a2a2"/><stop offset="0.92" stop-color="#8a8a8a"/><stop offset="1" stop-color="#7a7a7a"/></radialGradient></defs>
<circle cx="736.2" cy="263.1" r="130" fill="url(#ring)"/>
</svg>
<div style="position:absolute;left:-426px;top:-50px;width:1060px;height:607px;background:conic-gradient(from 90deg at 736.2px 263.1px, rgb(52,52,52) 0.00deg, rgb(56,56,56) 1.35deg, rgb(83,83,83) 2.52deg, rgb(142,142,142) 4.05deg, rgb(204,204,204) 5.85deg, rgb(219,219,219) 7.65deg, rgb(205,205,205) 9.00deg, rgb(200,200,200) 10.35deg, rgb(174,174,174) 12.15deg, rgb(113,113,113) 13.95deg, rgb(67,67,67) 15.48deg, rgb(56,56,56) 16.65deg, rgb(52,52,52) 18.00deg, rgb(56,56,56) 19.35deg, rgb(82,82,82) 20.52deg, rgb(141,141,141) 22.05deg, rgb(203,203,203) 23.85deg, rgb(218,218,218) 25.65deg, rgb(205,205,205) 27.00deg, rgb(201,201,201) 28.35deg, rgb(175,175,175) 30.15deg, rgb(114,114,114) 31.95deg, rgb(67,67,67) 33.48deg, rgb(56,56,56) 34.65deg, rgb(52,52,52) 36.00deg, rgb(56,56,56) 37.35deg, rgb(81,81,81) 38.52deg, rgb(138,138,138) 40.05deg, rgb(200,200,200) 41.85deg, rgb(216,216,216) 43.65deg, rgb(205,205,205) 45.00deg, rgb(203,203,203) 46.35deg, rgb(178,178,178) 48.15deg, rgb(117,117,117) 49.95deg, rgb(69,69,69) 51.48deg, rgb(56,56,56) 52.65deg, rgb(52,52,52) 54.00deg, rgb(56,56,56) 55.35deg, rgb(79,79,79) 56.52deg, rgb(134,134,134) 58.05deg, rgb(196,196,196) 59.85deg, rgb(214,214,214) 61.65deg, rgb(205,205,205) 63.00deg, rgb(205,205,205) 64.35deg, rgb(182,182,182) 66.15deg, rgb(121,121,121) 67.95deg, rgb(71,71,71) 69.48deg, rgb(56,56,56) 70.65deg, rgb(52,52,52) 72.00deg, rgb(56,56,56) 73.35deg, rgb(76,76,76) 74.52deg, rgb(130,130,130) 76.05deg, rgb(191,191,191) 77.85deg, rgb(211,211,211) 79.65deg, rgb(205,205,205) 81.00deg, rgb(208,208,208) 82.35deg, rgb(187,187,187) 84.15deg, rgb(125,125,125) 85.95deg, rgb(74,74,74) 87.48deg, rgb(56,56,56) 88.65deg, rgb(52,52,52) 90.00deg, rgb(56,56,56) 91.35deg, rgb(74,74,74) 92.52deg, rgb(125,125,125) 94.05deg, rgb(187,187,187) 95.85deg, rgb(208,208,208) 97.65deg, rgb(205,205,205) 99.00deg, rgb(211,211,211) 100.35deg, rgb(191,191,191) 102.15deg, rgb(130,130,130) 103.95deg, rgb(76,76,76) 105.48deg, rgb(56,56,56) 106.65deg, rgb(52,52,52) 108.00deg, rgb(56,56,56) 109.35deg, rgb(71,71,71) 110.52deg, rgb(121,121,121) 112.05deg, rgb(182,182,182) 113.85deg, rgb(205,205,205) 115.65deg, rgb(205,205,205) 117.00deg, rgb(214,214,214) 118.35deg, rgb(196,196,196) 120.15deg, rgb(134,134,134) 121.95deg, rgb(79,79,79) 123.48deg, rgb(56,56,56) 124.65deg, rgb(52,52,52) 126.00deg, rgb(56,56,56) 127.35deg, rgb(69,69,69) 128.52deg, rgb(117,117,117) 130.05deg, rgb(178,178,178) 131.85deg, rgb(203,203,203) 133.65deg, rgb(205,205,205) 135.00deg, rgb(216,216,216) 136.35deg, rgb(200,200,200) 138.15deg, rgb(138,138,138) 139.95deg, rgb(81,81,81) 141.48deg, rgb(56,56,56) 142.65deg, rgb(52,52,52) 144.00deg, rgb(56,56,56) 145.35deg, rgb(67,67,67) 146.52deg, rgb(114,114,114) 148.05deg, rgb(175,175,175) 149.85deg, rgb(201,201,201) 151.65deg, rgb(205,205,205) 153.00deg, rgb(218,218,218) 154.35deg, rgb(203,203,203) 156.15deg, rgb(141,141,141) 157.95deg, rgb(82,82,82) 159.48deg, rgb(56,56,56) 160.65deg, rgb(52,52,52) 162.00deg, rgb(56,56,56) 163.35deg, rgb(67,67,67) 164.52deg, rgb(113,113,113) 166.05deg, rgb(174,174,174) 167.85deg, rgb(200,200,200) 169.65deg, rgb(205,205,205) 171.00deg, rgb(219,219,219) 172.35deg, rgb(204,204,204) 174.15deg, rgb(142,142,142) 175.95deg, rgb(83,83,83) 177.48deg, rgb(56,56,56) 178.65deg, rgb(52,52,52) 180.00deg, rgb(56,56,56) 181.35deg, rgb(67,67,67) 182.52deg, rgb(113,113,113) 184.05deg, rgb(174,174,174) 185.85deg, rgb(200,200,200) 187.65deg, rgb(205,205,205) 189.00deg, rgb(219,219,219) 190.35deg, rgb(204,204,204) 192.15deg, rgb(142,142,142) 193.95deg, rgb(83,83,83) 195.48deg, rgb(56,56,56) 196.65deg, rgb(52,52,52) 198.00deg, rgb(56,56,56) 199.35deg, rgb(67,67,67) 200.52deg, rgb(114,114,114) 202.05deg, rgb(175,175,175) 203.85deg, rgb(201,201,201) 205.65deg, rgb(205,205,205) 207.00deg, rgb(218,218,218) 208.35deg, rgb(203,203,203) 210.15deg, rgb(141,141,141) 211.95deg, rgb(82,82,82) 213.48deg, rgb(56,56,56) 214.65deg, rgb(52,52,52) 216.00deg, rgb(56,56,56) 217.35deg, rgb(69,69,69) 218.52deg, rgb(117,117,117) 220.05deg, rgb(178,178,178) 221.85deg, rgb(203,203,203) 223.65deg, rgb(205,205,205) 225.00deg, rgb(216,216,216) 226.35deg, rgb(200,200,200) 228.15deg, rgb(138,138,138) 229.95deg, rgb(81,81,81) 231.48deg, rgb(56,56,56) 232.65deg, rgb(52,52,52) 234.00deg, rgb(56,56,56) 235.35deg, rgb(71,71,71) 236.52deg, rgb(121,121,121) 238.05deg, rgb(182,182,182) 239.85deg, rgb(205,205,205) 241.65deg, rgb(205,205,205) 243.00deg, rgb(214,214,214) 244.35deg, rgb(196,196,196) 246.15deg, rgb(134,134,134) 247.95deg, rgb(79,79,79) 249.48deg, rgb(56,56,56) 250.65deg, rgb(52,52,52) 252.00deg, rgb(56,56,56) 253.35deg, rgb(74,74,74) 254.52deg, rgb(125,125,125) 256.05deg, rgb(187,187,187) 257.85deg, rgb(208,208,208) 259.65deg, rgb(205,205,205) 261.00deg, rgb(211,211,211) 262.35deg, rgb(191,191,191) 264.15deg, rgb(130,130,130) 265.95deg, rgb(76,76,76) 267.48deg, rgb(56,56,56) 268.65deg, rgb(52,52,52) 270.00deg, rgb(56,56,56) 271.35deg, rgb(76,76,76) 272.52deg, rgb(130,130,130) 274.05deg, rgb(191,191,191) 275.85deg, rgb(211,211,211) 277.65deg, rgb(205,205,205) 279.00deg, rgb(208,208,208) 280.35deg, rgb(187,187,187) 282.15deg, rgb(125,125,125) 283.95deg, rgb(74,74,74) 285.48deg, rgb(56,56,56) 286.65deg, rgb(52,52,52) 288.00deg, rgb(56,56,56) 289.35deg, rgb(79,79,79) 290.52deg, rgb(134,134,134) 292.05deg, rgb(196,196,196) 293.85deg, rgb(214,214,214) 295.65deg, rgb(205,205,205) 297.00deg, rgb(205,205,205) 298.35deg, rgb(182,182,182) 300.15deg, rgb(121,121,121) 301.95deg, rgb(71,71,71) 303.48deg, rgb(56,56,56) 304.65deg, rgb(52,52,52) 306.00deg, rgb(56,56,56) 307.35deg, rgb(81,81,81) 308.52deg, rgb(138,138,138) 310.05deg, rgb(200,200,200) 311.85deg, rgb(216,216,216) 313.65deg, rgb(205,205,205) 315.00deg, rgb(203,203,203) 316.35deg, rgb(178,178,178) 318.15deg, rgb(117,117,117) 319.95deg, rgb(69,69,69) 321.48deg, rgb(56,56,56) 322.65deg, rgb(52,52,52) 324.00deg, rgb(56,56,56) 325.35deg, rgb(82,82,82) 326.52deg, rgb(141,141,141) 328.05deg, rgb(203,203,203) 329.85deg, rgb(218,218,218) 331.65deg, rgb(205,205,205) 333.00deg, rgb(201,201,201) 334.35deg, rgb(175,175,175) 336.15deg, rgb(114,114,114) 337.95deg, rgb(67,67,67) 339.48deg, rgb(56,56,56) 340.65deg, rgb(52,52,52) 342.00deg, rgb(56,56,56) 343.35deg, rgb(83,83,83) 344.52deg, rgb(142,142,142) 346.05deg, rgb(204,204,204) 347.85deg, rgb(219,219,219) 349.65deg, rgb(205,205,205) 351.00deg, rgb(200,200,200) 352.35deg, rgb(174,174,174) 354.15deg, rgb(113,113,113) 355.95deg, rgb(67,67,67) 357.48deg, rgb(56,56,56) 358.65deg, rgb(52,52,52) 360.00deg);clip-path:url(#fl2)"></div>
<svg style="position:absolute;left:-426px;top:-50px" width="1060" height="607">
<defs><path id="ctr" d="M907.2 263.1 908.7 264.7 912.2 265.1 921.2 265.4 936.2 265.6 950.2 267.9 952.2 269.3 954.7 270.5 957.7 271.3 961.2 271.8 965.2 272.0 969.5 272.2 974.0 272.5 978.7 272.8 983.7 273.2 987.6 273.5 990.4 273.7 992.1 273.9 992.8 274.1 993.2 274.4 993.4 274.9 993.5 275.7 993.3 276.6 992.8 277.5 992.0 278.3 991.0 279.1 989.6 279.9 988.0 280.8 986.4 281.7 984.6 282.6 982.7 283.5 980.8 284.5 979.0 285.4 977.3 286.3 975.6 287.2 974.1 288.3 972.7 289.6 971.4 291.1 970.2 292.8 969.2 294.2 968.3 295.2 967.5 295.7 966.8 295.9 966.3 296.1 966.0 296.2 965.8 296.2 926.2 290.9 889.6 285.3 877.7 283.6 874.2 283.5 872.1 284.6 873.8 286.3 877.1 287.3 889.0 289.4 925.5 295.4 965.7 303.1 966.3 303.5 966.8 304.3 967.4 305.5 968.0 307.1 968.5 309.2 969.3 311.0 970.2 312.7 971.4 314.2 972.7 315.5 974.0 316.9 975.4 318.4 976.9 319.8 978.4 321.3 979.9 322.8 981.2 324.1 982.4 325.4 983.4 326.6 984.2 327.7 984.7 328.7 984.9 329.7 984.7 330.6 984.5 331.3 984.1 331.8 983.6 331.9 983.0 331.9 981.3 331.6 978.5 330.9 974.7 330.0 969.8 328.8 965.2 327.6 960.9 326.5 956.7 325.4 952.9 324.4 949.4 323.8 946.3 323.6 943.6 323.9 941.2 324.7 939.4 325.3 938.3 325.6 937.7 325.8 927.2 322.6 912.9 318.1 904.2 315.6 900.8 314.9 898.8 315.9 899.8 317.9 903.0 319.4 911.4 322.5 925.7 327.2 938.3 333.8 939.7 335.8 941.7 337.6 944.3 339.3 947.5 340.9 951.2 342.3 955.2 343.9 959.4 345.5 963.8 347.3 968.5 349.2 972.1 350.7 974.7 351.8 976.3 352.5 976.8 352.8 977.1 353.3 977.2 353.9 977.0 354.6 976.5 355.4 975.8 356.1 974.8 356.6 973.5 357.1 972.0 357.4 970.2 357.7 968.4 358.1 966.4 358.4 964.3 358.7 962.2 359.0 960.2 359.3 958.3 359.7 956.5 360.0 954.7 360.5 952.9 361.3 951.2 362.4 949.6 363.7 948.2 364.7 947.0 365.3 946.1 365.6 945.4 365.6 944.9 365.6 944.5 365.6 944.4 365.6 908.3 348.2 875.3 331.6 864.5 326.3 861.1 325.2 858.8 325.6 859.9 327.7 862.8 329.7 873.4 335.3 906.2 352.3 942.1 372.1 942.5 372.7 942.8 373.6 943.0 374.9 943.0 376.6 942.9 378.7 943.1 380.7 943.5 382.6 944.1 384.4 944.9 386.1 945.7 387.8 946.7 389.6 947.6 391.4 948.6 393.3 949.5 395.1 950.3 396.8 951.1 398.4 951.7 399.9 952.1 401.2 952.3 402.3 952.1 403.3 951.7 404.1 951.3 404.7 950.8 405.0 950.2 405.0 949.6 404.8 948.1 403.9 945.7 402.5 942.4 400.4 938.1 397.8 934.1 395.2 930.3 392.8 926.7 390.5 923.3 388.3 920.2 386.7 917.3 385.6 914.6 385.0 912.1 385.0 910.3 385.0 909.0 385.0 908.4 385.0 899.4 378.7 887.2 370.0 879.8 364.9 876.7 363.2 874.5 363.6 874.8 365.8 877.4 368.2 884.5 373.7 896.6 382.6 906.5 392.7 907.3 395.1 908.6 397.5 910.6 399.9 913.1 402.4 916.2 404.9 919.5 407.6 923.0 410.5 926.7 413.5 930.5 416.7 933.5 419.3 935.6 421.1 936.9 422.3 937.3 422.8 937.5 423.3 937.3 423.9 936.9 424.5 936.3 425.1 935.4 425.6 934.2 425.8 932.9 425.8 931.3 425.6 929.5 425.4 927.7 425.2 925.7 424.9 923.6 424.5 921.5 424.2 919.5 423.9 917.6 423.6 915.8 423.3 913.9 423.3 912.0 423.5 910.0 424.0 908.1 424.7 906.4 425.2 905.1 425.5 904.1 425.5 903.5 425.2 903.0 425.1 902.7 424.9 902.5 424.9 873.6 397.2 847.3 371.2 838.7 362.9 835.8 360.8 833.5 360.4 833.9 362.7 836.0 365.6 844.3 374.2 870.3 400.5 898.3 430.4 898.6 431.0 898.6 432.0 898.3 433.3 897.8 435.0 897.1 436.9 896.6 438.9 896.4 440.8 896.4 442.7 896.7 444.5 897.0 446.4 897.3 448.4 897.6 450.5 898.0 452.6 898.3 454.6 898.5 456.4 898.7 458.2 898.9 459.8 898.9 461.1 898.7 462.3 898.2 463.2 897.6 463.8 897.0 464.2 896.4 464.4 895.9 464.2 895.4 463.8 894.2 462.5 892.4 460.4 889.8 457.4 886.6 453.6 883.6 449.9 880.7 446.4 878.0 443.1 875.5 440.0 873.0 437.5 870.6 435.5 868.2 434.2 865.8 433.4 864.1 432.8 862.9 432.5 862.3 432.3 855.7 423.5 846.8 411.4 841.3 404.3 838.9 401.7 836.7 401.4 836.3 403.6 838.0 406.7 843.1 414.1 851.8 426.3 858.1 439.0 858.1 441.5 858.7 444.2 859.8 447.1 861.4 450.2 863.6 453.6 865.9 457.2 868.3 461.0 870.9 465.0 873.5 469.3 875.6 472.6 877.0 475.0 877.9 476.5 878.1 477.1 878.1 477.7 877.8 478.2 877.2 478.6 876.4 479.0 875.4 479.2 874.3 479.0 873.0 478.6 871.5 478.0 869.9 477.2 868.2 476.4 866.4 475.5 864.5 474.5 862.7 473.6 860.9 472.6 859.2 471.8 857.5 471.0 855.7 470.4 853.8 470.0 851.8 469.8 849.7 469.9 848.0 469.9 846.7 469.7 845.8 469.4 845.2 469.0 844.8 468.7 844.5 468.5 844.4 468.4 825.4 433.1 808.4 400.3 802.8 389.7 800.8 386.8 798.7 385.7 798.3 388.0 799.4 391.4 804.7 402.2 821.3 435.2 838.7 472.3 838.7 473.0 838.4 473.9 837.8 475.1 836.8 476.5 835.5 478.1 834.4 479.8 833.6 481.6 833.1 483.4 832.8 485.2 832.4 487.1 832.1 489.1 831.8 491.2 831.5 493.3 831.2 495.3 830.8 497.1 830.5 498.9 830.2 500.4 829.7 501.7 829.2 502.7 828.5 503.4 827.7 503.9 827.0 504.1 826.4 504.0 825.9 503.7 825.6 503.2 824.9 501.6 823.8 499.0 822.3 495.4 820.4 490.7 818.6 486.3 817.0 482.1 815.4 478.1 814.0 474.4 812.4 471.2 810.7 468.6 808.9 466.6 806.9 465.2 805.4 464.1 804.4 463.3 803.9 463.0 800.3 452.6 795.6 438.3 792.5 429.9 791.0 426.7 789.0 425.7 788.0 427.7 788.7 431.1 791.2 439.8 795.7 454.1 797.8 468.1 797.0 470.5 796.7 473.2 796.9 476.3 797.5 479.8 798.5 483.6 799.6 487.8 800.7 492.1 801.9 496.7 803.1 501.6 804.0 505.4 804.7 508.2 805.0 509.9 805.0 510.5 804.9 511.0 804.4 511.4 803.7 511.6 802.8 511.8 801.8 511.6 800.8 511.1 799.7 510.3 798.5 509.3 797.2 508.1 795.9 506.8 794.4 505.3 792.9 503.8 791.5 502.3 790.0 500.9 788.6 499.6 787.3 498.3 785.8 497.1 784.1 496.2 782.3 495.4 780.2 494.9 778.6 494.3 777.4 493.7 776.6 493.2 776.2 492.6 775.9 492.2 775.8 491.9 775.7 491.7 768.5 452.4 762.5 415.9 760.4 404.0 759.4 400.7 757.7 399.0 756.6 401.1 756.7 404.6 758.4 416.5 764.0 453.1 769.0 493.7 768.8 494.4 768.3 495.2 767.3 496.1 765.9 497.1 764.2 498.3 762.7 499.6 761.4 501.0 760.3 502.5 759.4 504.2 758.5 505.9 757.6 507.7 756.6 509.6 755.7 511.5 754.8 513.3 753.9 514.9 753.0 516.5 752.2 517.9 751.4 518.9 750.6 519.7 749.7 520.2 748.8 520.4 748.0 520.3 747.5 520.1 747.2 519.7 747.0 519.0 746.8 517.3 746.6 514.5 746.3 510.6 745.9 505.6 745.6 500.9 745.3 496.4 745.1 492.1 744.9 488.1 744.4 484.6 743.6 481.6 742.4 479.1 741.0 477.1 739.9 475.6 739.2 474.6 738.8 474.1 738.7 463.1 738.5 448.1 738.2 439.1 737.8 435.6 736.2 434.1 734.6 435.6 734.2 439.1 733.9 448.1 733.8 463.1 731.4 477.1 730.0 479.1 728.8 481.6 728.0 484.6 727.5 488.1 727.3 492.1 727.1 496.4 726.8 500.9 726.5 505.6 726.1 510.6 725.8 514.5 725.6 517.3 725.4 519.0 725.2 519.7 724.9 520.1 724.4 520.3 723.6 520.4 722.7 520.2 721.8 519.7 721.0 518.9 720.2 517.9 719.4 516.5 718.5 514.9 717.6 513.3 716.7 511.5 715.8 509.6 714.8 507.7 713.9 505.9 713.0 504.2 712.1 502.5 711.0 501.0 709.7 499.6 708.2 498.3 706.5 497.1 705.1 496.1 704.1 495.2 703.6 494.4 703.4 493.7 703.2 493.2 703.1 492.9 703.1 492.7 708.4 453.1 714.0 416.5 715.7 404.6 715.8 401.1 714.7 399.0 713.0 400.7 712.0 404.0 709.9 415.9 703.9 452.4 696.2 492.6 695.8 493.2 695.0 493.7 693.8 494.3 692.2 494.9 690.1 495.4 688.3 496.2 686.6 497.1 685.1 498.3 683.8 499.6 682.4 500.9 680.9 502.3 679.5 503.8 678.0 505.3 676.5 506.8 675.2 508.1 673.9 509.3 672.7 510.3 671.6 511.1 670.6 511.6 669.6 511.8 668.7 511.6 668.0 511.4 667.5 511.0 667.4 510.5 667.4 509.9 667.7 508.2 668.4 505.4 669.3 501.6 670.5 496.7 671.7 492.1 672.8 487.8 673.9 483.6 674.9 479.8 675.5 476.3 675.7 473.2 675.4 470.5 674.6 468.1 674.0 466.3 673.7 465.2 673.5 464.6 676.7 454.1 681.2 439.8 683.7 431.1 684.4 427.7 683.4 425.7 681.4 426.7 679.9 429.9 676.8 438.3 672.1 452.6 665.5 465.2 663.5 466.6 661.7 468.6 660.0 471.2 658.4 474.4 657.0 478.1 655.4 482.1 653.8 486.3 652.0 490.7 650.1 495.4 648.6 499.0 647.5 501.6 646.8 503.2 646.5 503.7 646.0 504.0 645.4 504.1 644.7 503.9 643.9 503.4 643.2 502.7 642.7 501.7 642.2 500.4 641.9 498.9 641.6 497.1 641.2 495.3 640.9 493.3 640.6 491.2 640.3 489.1 640.0 487.1 639.6 485.2 639.3 483.4 638.8 481.6 638.0 479.8 636.9 478.1 635.6 476.5 634.6 475.1 634.0 473.9 633.7 473.0 633.7 472.3 633.7 471.8 633.7 471.4 633.7 471.3 651.1 435.2 667.7 402.2 673.0 391.4 674.1 388.0 673.7 385.7 671.6 386.8 669.6 389.7 664.0 400.3 647.0 433.1 627.2 469.0 626.6 469.4 625.7 469.7 624.4 469.9 622.7 469.9 620.6 469.8 618.6 470.0 616.7 470.4 614.9 471.0 613.2 471.8 611.5 472.6 609.7 473.6 607.9 474.5 606.0 475.5 604.2 476.4 602.5 477.2 600.9 478.0 599.4 478.6 598.1 479.0 597.0 479.2 596.0 479.0 595.2 478.6 594.6 478.2 594.3 477.7 594.3 477.1 594.5 476.5 595.4 475.0 596.8 472.6 598.9 469.3 601.5 465.0 604.1 461.0 606.5 457.2 608.8 453.6 611.0 450.2 612.6 447.1 613.7 444.2 614.3 441.5 614.3 439.0 614.3 437.2 614.3 435.9 614.3 435.3 620.6 426.3 629.3 414.1 634.4 406.7 636.1 403.6 635.7 401.4 633.5 401.7 631.1 404.3 625.6 411.4 616.7 423.5 606.6 433.4 604.2 434.2 601.8 435.5 599.4 437.5 596.9 440.0 594.4 443.1 591.7 446.4 588.8 449.9 585.8 453.6 582.6 457.4 580.0 460.4 578.2 462.5 577.0 463.8 576.5 464.2 576.0 464.4 575.4 464.2 574.8 463.8 574.2 463.2 573.7 462.3 573.5 461.1 573.5 459.8 573.7 458.2 573.9 456.4 574.1 454.6 574.4 452.6 574.8 450.5 575.1 448.4 575.4 446.4 575.7 444.5 576.0 442.7 576.0 440.8 575.8 438.9 575.3 436.9 574.6 435.0 574.1 433.3 573.8 432.0 573.8 431.0 574.1 430.4 574.2 429.9 574.4 429.6 574.4 429.4 602.1 400.5 628.1 374.2 636.4 365.6 638.5 362.7 638.9 360.4 636.6 360.8 633.7 362.9 625.1 371.2 598.8 397.2 568.9 425.2 568.3 425.5 567.3 425.5 566.0 425.2 564.3 424.7 562.4 424.0 560.4 423.5 558.5 423.3 556.6 423.3 554.8 423.6 552.9 423.9 550.9 424.2 548.8 424.5 546.7 424.9 544.7 425.2 542.9 425.4 541.1 425.6 539.5 425.8 538.2 425.8 537.0 425.6 536.1 425.1 535.5 424.5 535.1 423.9 534.9 423.3 535.1 422.8 535.5 422.3 536.8 421.1 538.9 419.3 541.9 416.7 545.7 413.5 549.4 410.5 552.9 407.6 556.2 404.9 559.3 402.4 561.8 399.9 563.8 397.5 565.1 395.1 565.9 392.7 566.5 391.0 566.8 389.8 567.0 389.2 575.8 382.6 587.9 373.7 595.0 368.2 597.6 365.8 597.9 363.6 595.7 363.2 592.6 364.9 585.2 370.0 573.0 378.7 560.3 385.0 557.8 385.0 555.1 385.6 552.2 386.7 549.1 388.3 545.7 390.5 542.1 392.8 538.3 395.2 534.3 397.8 530.0 400.4 526.7 402.5 524.3 403.9 522.8 404.8 522.2 405.0 521.6 405.0 521.1 404.7 520.7 404.1 520.3 403.3 520.1 402.3 520.3 401.2 520.7 399.9 521.3 398.4 522.1 396.8 522.9 395.1 523.8 393.3 524.8 391.4 525.7 389.6 526.7 387.8 527.5 386.1 528.3 384.4 528.9 382.6 529.3 380.7 529.5 378.7 529.4 376.6 529.4 374.9 529.6 373.6 529.9 372.7 530.3 372.1 530.6 371.7 530.8 371.4 530.9 371.3 566.2 352.3 599.0 335.3 609.6 329.7 612.5 327.7 613.6 325.6 611.3 325.2 607.9 326.3 597.1 331.6 564.1 348.2 527.0 365.6 526.3 365.6 525.4 365.3 524.2 364.7 522.8 363.7 521.2 362.4 519.5 361.3 517.7 360.5 515.9 360.0 514.1 359.7 512.2 359.3 510.2 359.0 508.1 358.7 506.0 358.4 504.0 358.1 502.2 357.7 500.4 357.4 498.9 357.1 497.6 356.6 496.6 356.1 495.9 355.4 495.4 354.6 495.2 353.9 495.3 353.3 495.6 352.8 496.1 352.5 497.7 351.8 500.3 350.7 503.9 349.2 508.6 347.3 513.0 345.5 517.2 343.9 521.2 342.3 524.9 340.9 528.1 339.3 530.7 337.6 532.7 335.8 534.1 333.8 535.2 332.3 536.0 331.3 536.3 330.8 546.7 327.2 561.0 322.5 569.4 319.4 572.6 317.9 573.6 315.9 571.6 314.9 568.2 315.6 559.5 318.1 545.2 322.6 531.2 324.7 528.8 323.9 526.1 323.6 523.0 323.8 519.5 324.4 515.7 325.4 511.5 326.5 507.2 327.6 502.6 328.8 497.7 330.0 493.9 330.9 491.1 331.6 489.4 331.9 488.8 331.9 488.3 331.8 487.9 331.3 487.7 330.6 487.5 329.7 487.7 328.7 488.2 327.7 489.0 326.6 490.0 325.4 491.2 324.1 492.5 322.8 494.0 321.3 495.5 319.8 497.0 318.4 498.4 316.9 499.7 315.5 501.0 314.2 502.2 312.7 503.1 311.0 503.9 309.2 504.4 307.1 505.0 305.5 505.6 304.3 506.1 303.5 506.7 303.1 507.1 302.8 507.4 302.7 507.6 302.6 546.9 295.4 583.4 289.4 595.3 287.3 598.6 286.3 600.3 284.6 598.2 283.5 594.7 283.6 582.8 285.3 546.2 290.9 505.6 295.9 504.9 295.7 504.1 295.2 503.2 294.2 502.2 292.8 501.0 291.1 499.7 289.6 498.3 288.3 496.8 287.2 495.1 286.3 493.4 285.4 491.6 284.5 489.7 283.5 487.8 282.6 486.0 281.7 484.4 280.8 482.8 279.9 481.4 279.1 480.4 278.3 479.6 277.5 479.1 276.6 478.9 275.7 479.0 274.9 479.2 274.4 479.6 274.1 480.3 273.9 482.0 273.7 484.8 273.5 488.7 273.2 493.7 272.8 498.5 272.5 503.0 272.2 507.2 272.0 511.2 271.8 514.7 271.3 517.7 270.5 520.2 269.3 522.2 267.9 523.7 266.8 524.7 266.1 525.2 265.7 536.2 265.6 551.2 265.4 560.2 265.1 563.7 264.7 565.2 263.1 563.7 261.5 560.2 261.1 551.2 260.8 536.2 260.7 522.2 258.3 520.2 256.9 517.7 255.7 514.7 254.9 511.2 254.4 507.2 254.2 503.0 254.0 498.5 253.7 493.7 253.4 488.7 253.0 484.8 252.7 482.0 252.5 480.3 252.3 479.6 252.1 479.2 251.8 479.0 251.3 478.9 250.5 479.1 249.6 479.6 248.7 480.4 247.9 481.4 247.1 482.8 246.3 484.4 245.4 486.0 244.5 487.8 243.6 489.7 242.7 491.6 241.7 493.4 240.8 495.1 239.9 496.8 239.0 498.3 237.9 499.7 236.6 501.0 235.1 502.2 233.4 503.2 232.0 504.1 231.0 504.9 230.5 505.6 230.3 506.1 230.1 506.4 230.0 506.6 230.0 546.2 235.3 582.8 240.9 594.7 242.6 598.2 242.7 600.3 241.6 598.6 239.9 595.3 238.9 583.4 236.8 546.9 230.8 506.7 223.1 506.1 222.7 505.6 221.9 505.0 220.7 504.4 219.1 503.9 217.0 503.1 215.2 502.2 213.5 501.0 212.0 499.7 210.7 498.4 209.3 497.0 207.8 495.5 206.4 494.0 204.9 492.5 203.4 491.2 202.1 490.0 200.8 489.0 199.6 488.2 198.5 487.7 197.5 487.5 196.5 487.7 195.6 487.9 194.9 488.3 194.4 488.8 194.3 489.4 194.3 491.1 194.6 493.9 195.3 497.7 196.2 502.6 197.4 507.2 198.6 511.5 199.7 515.7 200.8 519.5 201.8 523.0 202.4 526.1 202.6 528.8 202.3 531.2 201.5 533.0 200.9 534.1 200.6 534.7 200.4 545.2 203.6 559.5 208.1 568.2 210.6 571.6 211.3 573.6 210.3 572.6 208.3 569.4 206.8 561.0 203.7 546.7 199.0 534.1 192.4 532.7 190.4 530.7 188.6 528.1 186.9 524.9 185.3 521.2 183.9 517.2 182.3 513.0 180.7 508.6 178.9 503.9 177.0 500.3 175.5 497.7 174.4 496.1 173.7 495.6 173.4 495.3 172.9 495.2 172.3 495.4 171.6 495.9 170.8 496.6 170.1 497.6 169.6 498.9 169.1 500.4 168.8 502.2 168.5 504.0 168.1 506.0 167.8 508.1 167.5 510.2 167.2 512.2 166.9 514.1 166.5 515.9 166.2 517.7 165.7 519.5 164.9 521.2 163.8 522.8 162.5 524.2 161.5 525.4 160.9 526.3 160.6 527.0 160.6 527.5 160.6 527.9 160.6 528.0 160.6 564.1 178.0 597.1 194.6 607.9 199.9 611.3 201.0 613.6 200.6 612.5 198.5 609.6 196.5 599.0 190.9 566.2 173.9 530.3 154.1 529.9 153.5 529.6 152.6 529.4 151.3 529.4 149.6 529.5 147.5 529.3 145.5 528.9 143.6 528.3 141.8 527.5 140.1 526.7 138.4 525.7 136.6 524.8 134.8 523.8 132.9 522.9 131.1 522.1 129.4 521.3 127.8 520.7 126.3 520.3 125.0 520.1 123.9 520.3 122.9 520.7 122.1 521.1 121.5 521.6 121.2 522.2 121.2 522.8 121.4 524.3 122.3 526.7 123.7 530.0 125.8 534.3 128.4 538.3 131.0 542.1 133.4 545.7 135.7 549.1 137.9 552.2 139.5 555.1 140.6 557.8 141.2 560.3 141.2 562.1 141.2 563.4 141.2 564.0 141.2 573.0 147.5 585.2 156.2 592.6 161.3 595.7 163.0 597.9 162.6 597.6 160.4 595.0 158.0 587.9 152.5 575.8 143.6 565.9 133.5 565.1 131.1 563.8 128.7 561.8 126.3 559.3 123.8 556.2 121.3 552.9 118.6 549.4 115.7 545.7 112.7 541.9 109.5 538.9 106.9 536.8 105.1 535.5 103.9 535.1 103.4 534.9 102.9 535.1 102.3 535.5 101.7 536.1 101.1 537.0 100.6 538.2 100.4 539.5 100.4 541.1 100.6 542.9 100.8 544.7 101.0 546.7 101.3 548.8 101.7 550.9 102.0 552.9 102.3 554.8 102.6 556.6 102.9 558.5 102.9 560.4 102.7 562.4 102.2 564.3 101.5 566.0 101.0 567.3 100.7 568.3 100.7 568.9 101.0 569.4 101.1 569.7 101.3 569.9 101.3 598.8 129.0 625.1 155.0 633.7 163.3 636.6 165.4 638.9 165.8 638.5 163.5 636.4 160.6 628.1 152.0 602.1 125.7 574.1 95.8 573.8 95.2 573.8 94.2 574.1 92.9 574.6 91.2 575.3 89.3 575.8 87.3 576.0 85.4 576.0 83.5 575.7 81.7 575.4 79.8 575.1 77.8 574.8 75.7 574.4 73.6 574.1 71.6 573.9 69.8 573.7 68.0 573.5 66.4 573.5 65.1 573.7 63.9 574.2 63.0 574.8 62.4 575.4 62.0 576.0 61.8 576.5 62.0 577.0 62.4 578.2 63.7 580.0 65.8 582.6 68.8 585.8 72.6 588.8 76.3 591.7 79.8 594.4 83.1 596.9 86.2 599.4 88.7 601.8 90.7 604.2 92.0 606.6 92.8 608.3 93.4 609.5 93.7 610.1 93.9 616.7 102.7 625.6 114.8 631.1 121.9 633.5 124.5 635.7 124.8 636.1 122.6 634.4 119.5 629.3 112.1 620.6 99.9 614.3 87.2 614.3 84.7 613.7 82.0 612.6 79.1 611.0 76.0 608.8 72.6 606.5 69.0 604.1 65.2 601.5 61.2 598.9 56.9 596.8 53.6 595.4 51.2 594.5 49.7 594.3 49.1 594.3 48.5 594.6 48.0 595.2 47.6 596.0 47.2 597.0 47.0 598.1 47.2 599.4 47.6 600.9 48.2 602.5 49.0 604.2 49.8 606.0 50.7 607.9 51.7 609.7 52.6 611.5 53.6 613.2 54.4 614.9 55.2 616.7 55.8 618.6 56.2 620.6 56.4 622.7 56.3 624.4 56.3 625.7 56.5 626.6 56.8 627.2 57.2 627.6 57.5 627.9 57.7 628.0 57.8 647.0 93.1 664.0 125.9 669.6 136.5 671.6 139.4 673.7 140.5 674.1 138.2 673.0 134.8 667.7 124.0 651.1 91.0 633.7 53.9 633.7 53.2 634.0 52.3 634.6 51.1 635.6 49.7 636.9 48.1 638.0 46.4 638.8 44.6 639.3 42.8 639.6 41.0 640.0 39.1 640.3 37.1 640.6 35.0 640.9 32.9 641.2 30.9 641.6 29.1 641.9 27.3 642.2 25.8 642.7 24.5 643.2 23.5 643.9 22.8 644.7 22.3 645.4 22.1 646.0 22.2 646.5 22.5 646.8 23.0 647.5 24.6 648.6 27.2 650.1 30.8 652.0 35.5 653.8 39.9 655.4 44.1 657.0 48.1 658.4 51.8 660.0 55.0 661.7 57.6 663.5 59.6 665.5 61.0 667.0 62.1 668.0 62.9 668.5 63.2 672.1 73.6 676.8 87.9 679.9 96.3 681.4 99.5 683.4 100.5 684.4 98.5 683.7 95.1 681.2 86.4 676.7 72.1 674.6 58.1 675.4 55.7 675.7 53.0 675.5 49.9 674.9 46.4 673.9 42.6 672.8 38.4 671.7 34.1 670.5 29.5 669.3 24.6 668.4 20.8 667.7 18.0 667.4 16.3 667.4 15.7 667.5 15.2 668.0 14.8 668.7 14.6 669.6 14.4 670.6 14.6 671.6 15.1 672.7 15.9 673.9 16.9 675.2 18.1 676.5 19.4 678.0 20.9 679.5 22.4 680.9 23.9 682.4 25.3 683.8 26.6 685.1 27.9 686.6 29.1 688.3 30.0 690.1 30.8 692.2 31.3 693.8 31.9 695.0 32.5 695.8 33.0 696.2 33.6 696.5 34.0 696.6 34.3 696.7 34.5 703.9 73.8 709.9 110.3 712.0 122.2 713.0 125.5 714.7 127.2 715.8 125.1 715.7 121.6 714.0 109.7 708.4 73.1 703.4 32.5 703.6 31.8 704.1 31.0 705.1 30.1 706.5 29.1 708.2 27.9 709.7 26.6 711.0 25.2 712.1 23.7 713.0 22.0 713.9 20.3 714.8 18.5 715.8 16.6 716.7 14.7 717.6 12.9 718.5 11.3 719.4 9.7 720.2 8.3 721.0 7.3 721.8 6.5 722.7 6.0 723.6 5.8 724.4 5.9 724.9 6.1 725.2 6.5 725.4 7.2 725.6 8.9 725.8 11.7 726.1 15.6 726.5 20.6 726.8 25.4 727.1 29.9 727.3 34.1 727.5 38.1 728.0 41.6 728.8 44.6 730.0 47.1 731.4 49.1 732.5 50.6 733.2 51.6 733.6 52.1 733.8 63.1 733.9 78.1 734.2 87.1 734.6 90.6 736.2 92.1 737.8 90.6 738.2 87.1 738.5 78.1 738.7 63.1 741.0 49.1 742.4 47.1 743.6 44.6 744.4 41.6 744.9 38.1 745.1 34.1 745.3 29.9 745.6 25.4 745.9 20.6 746.3 15.6 746.6 11.7 746.8 8.9 747.0 7.2 747.2 6.5 747.5 6.1 748.0 5.9 748.8 5.8 749.7 6.0 750.6 6.5 751.4 7.3 752.2 8.3 753.0 9.7 753.9 11.3 754.8 12.9 755.7 14.7 756.6 16.6 757.6 18.5 758.5 20.3 759.4 22.0 760.3 23.7 761.4 25.2 762.7 26.6 764.2 27.9 765.9 29.1 767.3 30.1 768.3 31.0 768.8 31.8 769.0 32.5 769.2 33.0 769.3 33.3 769.3 33.5 764.0 73.1 758.4 109.7 756.7 121.6 756.6 125.1 757.7 127.2 759.4 125.5 760.4 122.2 762.5 110.3 768.5 73.8 776.2 33.6 776.6 33.0 777.4 32.5 778.6 31.9 780.2 31.3 782.3 30.8 784.1 30.0 785.8 29.1 787.3 27.9 788.6 26.6 790.0 25.3 791.5 23.9 792.9 22.4 794.4 20.9 795.9 19.4 797.2 18.1 798.5 16.9 799.7 15.9 800.8 15.1 801.8 14.6 802.8 14.4 803.7 14.6 804.4 14.8 804.9 15.2 805.0 15.7 805.0 16.3 804.7 18.0 804.0 20.8 803.1 24.6 801.9 29.5 800.7 34.1 799.6 38.4 798.5 42.6 797.5 46.4 796.9 49.9 796.7 53.0 797.0 55.7 797.8 58.1 798.4 59.9 798.7 61.0 798.9 61.6 795.7 72.1 791.2 86.4 788.7 95.1 788.0 98.5 789.0 100.5 791.0 99.5 792.5 96.3 795.6 87.9 800.3 73.6 806.9 61.0 808.9 59.6 810.7 57.6 812.4 55.0 814.0 51.8 815.4 48.1 817.0 44.1 818.6 39.9 820.4 35.5 822.3 30.8 823.8 27.2 824.9 24.6 825.6 23.0 825.9 22.5 826.4 22.2 827.0 22.1 827.7 22.3 828.5 22.8 829.2 23.5 829.7 24.5 830.2 25.8 830.5 27.3 830.8 29.1 831.2 30.9 831.5 32.9 831.8 35.0 832.1 37.1 832.4 39.1 832.8 41.0 833.1 42.8 833.6 44.6 834.4 46.4 835.5 48.1 836.8 49.7 837.8 51.1 838.4 52.3 838.7 53.2 838.7 53.9 838.7 54.4 838.7 54.8 838.7 54.9 821.3 91.0 804.7 124.0 799.4 134.8 798.3 138.2 798.7 140.5 800.8 139.4 802.8 136.5 808.4 125.9 825.4 93.1 845.2 57.2 845.8 56.8 846.7 56.5 848.0 56.3 849.7 56.3 851.8 56.4 853.8 56.2 855.7 55.8 857.5 55.2 859.2 54.4 860.9 53.6 862.7 52.6 864.5 51.7 866.4 50.7 868.2 49.8 869.9 49.0 871.5 48.2 873.0 47.6 874.3 47.2 875.4 47.0 876.4 47.2 877.2 47.6 877.8 48.0 878.1 48.5 878.1 49.1 877.9 49.7 877.0 51.2 875.6 53.6 873.5 56.9 870.9 61.2 868.3 65.2 865.9 69.0 863.6 72.6 861.4 76.0 859.8 79.1 858.7 82.0 858.1 84.7 858.1 87.2 858.1 89.0 858.1 90.3 858.1 90.9 851.8 99.9 843.1 112.1 838.0 119.5 836.3 122.6 836.7 124.8 838.9 124.5 841.3 121.9 846.8 114.8 855.7 102.7 865.8 92.8 868.2 92.0 870.6 90.7 873.0 88.7 875.5 86.2 878.0 83.1 880.7 79.8 883.6 76.3 886.6 72.6 889.8 68.8 892.4 65.8 894.2 63.7 895.4 62.4 895.9 62.0 896.4 61.8 897.0 62.0 897.6 62.4 898.2 63.0 898.7 63.9 898.9 65.1 898.9 66.4 898.7 68.0 898.5 69.8 898.3 71.6 898.0 73.6 897.6 75.7 897.3 77.8 897.0 79.8 896.7 81.7 896.4 83.5 896.4 85.4 896.6 87.3 897.1 89.3 897.8 91.2 898.3 92.9 898.6 94.2 898.6 95.2 898.3 95.8 898.2 96.3 898.0 96.6 898.0 96.8 870.3 125.7 844.3 152.0 836.0 160.6 833.9 163.5 833.5 165.8 835.8 165.4 838.7 163.3 847.3 155.0 873.6 129.0 903.5 101.0 904.1 100.7 905.1 100.7 906.4 101.0 908.1 101.5 910.0 102.2 912.0 102.7 913.9 102.9 915.8 102.9 917.6 102.6 919.5 102.3 921.5 102.0 923.6 101.7 925.7 101.3 927.7 101.0 929.5 100.8 931.3 100.6 932.9 100.4 934.2 100.4 935.4 100.6 936.3 101.1 936.9 101.7 937.3 102.3 937.5 102.9 937.3 103.4 936.9 103.9 935.6 105.1 933.5 106.9 930.5 109.5 926.7 112.7 923.0 115.7 919.5 118.6 916.2 121.3 913.1 123.8 910.6 126.3 908.6 128.7 907.3 131.1 906.5 133.5 905.9 135.2 905.6 136.4 905.4 137.0 896.6 143.6 884.5 152.5 877.4 158.0 874.8 160.4 874.5 162.6 876.7 163.0 879.8 161.3 887.2 156.2 899.4 147.5 912.1 141.2 914.6 141.2 917.3 140.6 920.2 139.5 923.3 137.9 926.7 135.7 930.3 133.4 934.1 131.0 938.1 128.4 942.4 125.8 945.7 123.7 948.1 122.3 949.6 121.4 950.2 121.2 950.8 121.2 951.3 121.5 951.7 122.1 952.1 122.9 952.3 123.9 952.1 125.0 951.7 126.3 951.1 127.8 950.3 129.4 949.5 131.1 948.6 132.9 947.6 134.8 946.7 136.6 945.7 138.4 944.9 140.1 944.1 141.8 943.5 143.6 943.1 145.5 942.9 147.5 943.0 149.6 943.0 151.3 942.8 152.6 942.5 153.5 942.1 154.1 941.8 154.5 941.6 154.8 941.5 154.9 906.2 173.9 873.4 190.9 862.8 196.5 859.9 198.5 858.8 200.6 861.1 201.0 864.5 199.9 875.3 194.6 908.3 178.0 945.4 160.6 946.1 160.6 947.0 160.9 948.2 161.5 949.6 162.5 951.2 163.8 952.9 164.9 954.7 165.7 956.5 166.2 958.3 166.5 960.2 166.9 962.2 167.2 964.3 167.5 966.4 167.8 968.4 168.1 970.2 168.5 972.0 168.8 973.5 169.1 974.8 169.6 975.8 170.1 976.5 170.8 977.0 171.6 977.2 172.3 977.1 172.9 976.8 173.4 976.3 173.7 974.7 174.4 972.1 175.5 968.5 177.0 963.8 178.9 959.4 180.7 955.2 182.3 951.2 183.9 947.5 185.3 944.3 186.9 941.7 188.6 939.7 190.4 938.3 192.4 937.2 193.9 936.4 194.9 936.1 195.4 925.7 199.0 911.4 203.7 903.0 206.8 899.8 208.3 898.8 210.3 900.8 211.3 904.2 210.6 912.9 208.1 927.2 203.6 941.2 201.5 943.6 202.3 946.3 202.6 949.4 202.4 952.9 201.8 956.7 200.8 960.9 199.7 965.2 198.6 969.8 197.4 974.7 196.2 978.5 195.3 981.3 194.6 983.0 194.3 983.6 194.3 984.1 194.4 984.5 194.9 984.7 195.6 984.9 196.5 984.7 197.5 984.2 198.5 983.4 199.6 982.4 200.8 981.2 202.1 979.9 203.4 978.4 204.9 976.9 206.4 975.4 207.8 974.0 209.3 972.7 210.7 971.4 212.0 970.2 213.5 969.3 215.2 968.5 217.0 968.0 219.1 967.4 220.7 966.8 221.9 966.3 222.7 965.7 223.1 965.3 223.4 965.0 223.5 964.8 223.6 925.5 230.8 889.0 236.8 877.1 238.9 873.8 239.9 872.1 241.6 874.2 242.7 877.7 242.6 889.6 240.9 926.2 235.3 966.8 230.3 967.5 230.5 968.3 231.0 969.2 232.0 970.2 233.4 971.4 235.1 972.7 236.6 974.1 237.9 975.6 239.0 977.3 239.9 979.0 240.8 980.8 241.7 982.7 242.7 984.6 243.6 986.4 244.5 988.0 245.4 989.6 246.3 991.0 247.1 992.0 247.9 992.8 248.7 993.3 249.6 993.5 250.5 993.4 251.3 993.2 251.8 992.8 252.1 992.1 252.3 990.4 252.5 987.6 252.7 983.7 253.0 978.7 253.4 974.0 253.7 969.5 254.0 965.2 254.2 961.2 254.4 957.7 254.9 954.7 255.7 952.2 256.9 950.2 258.3 948.7 259.4 947.7 260.1 947.2 260.5 936.2 260.6 921.2 260.8 912.2 261.1 908.7 261.5Z"/><clipPath id="fl"><use href="#ctr"/></clipPath><clipPath id="fl2"><path clip-rule="evenodd" d="M907.2 263.1 908.7 264.7 912.2 265.1 921.2 265.4 936.2 265.6 950.2 267.9 952.2 269.3 954.7 270.5 957.7 271.3 961.2 271.8 965.2 272.0 969.5 272.2 974.0 272.5 978.7 272.8 983.7 273.2 987.6 273.5 990.4 273.7 992.1 273.9 992.8 274.1 993.2 274.4 993.4 274.9 993.5 275.7 993.3 276.6 992.8 277.5 992.0 278.3 991.0 279.1 989.6 279.9 988.0 280.8 986.4 281.7 984.6 282.6 982.7 283.5 980.8 284.5 979.0 285.4 977.3 286.3 975.6 287.2 974.1 288.3 972.7 289.6 971.4 291.1 970.2 292.8 969.2 294.2 968.3 295.2 967.5 295.7 966.8 295.9 966.3 296.1 966.0 296.2 965.8 296.2 926.2 290.9 889.6 285.3 877.7 283.6 874.2 283.5 872.1 284.6 873.8 286.3 877.1 287.3 889.0 289.4 925.5 295.4 965.7 303.1 966.3 303.5 966.8 304.3 967.4 305.5 968.0 307.1 968.5 309.2 969.3 311.0 970.2 312.7 971.4 314.2 972.7 315.5 974.0 316.9 975.4 318.4 976.9 319.8 978.4 321.3 979.9 322.8 981.2 324.1 982.4 325.4 983.4 326.6 984.2 327.7 984.7 328.7 984.9 329.7 984.7 330.6 984.5 331.3 984.1 331.8 983.6 331.9 983.0 331.9 981.3 331.6 978.5 330.9 974.7 330.0 969.8 328.8 965.2 327.6 960.9 326.5 956.7 325.4 952.9 324.4 949.4 323.8 946.3 323.6 943.6 323.9 941.2 324.7 939.4 325.3 938.3 325.6 937.7 325.8 927.2 322.6 912.9 318.1 904.2 315.6 900.8 314.9 898.8 315.9 899.8 317.9 903.0 319.4 911.4 322.5 925.7 327.2 938.3 333.8 939.7 335.8 941.7 337.6 944.3 339.3 947.5 340.9 951.2 342.3 955.2 343.9 959.4 345.5 963.8 347.3 968.5 349.2 972.1 350.7 974.7 351.8 976.3 352.5 976.8 352.8 977.1 353.3 977.2 353.9 977.0 354.6 976.5 355.4 975.8 356.1 974.8 356.6 973.5 357.1 972.0 357.4 970.2 357.7 968.4 358.1 966.4 358.4 964.3 358.7 962.2 359.0 960.2 359.3 958.3 359.7 956.5 360.0 954.7 360.5 952.9 361.3 951.2 362.4 949.6 363.7 948.2 364.7 947.0 365.3 946.1 365.6 945.4 365.6 944.9 365.6 944.5 365.6 944.4 365.6 908.3 348.2 875.3 331.6 864.5 326.3 861.1 325.2 858.8 325.6 859.9 327.7 862.8 329.7 873.4 335.3 906.2 352.3 942.1 372.1 942.5 372.7 942.8 373.6 943.0 374.9 943.0 376.6 942.9 378.7 943.1 380.7 943.5 382.6 944.1 384.4 944.9 386.1 945.7 387.8 946.7 389.6 947.6 391.4 948.6 393.3 949.5 395.1 950.3 396.8 951.1 398.4 951.7 399.9 952.1 401.2 952.3 402.3 952.1 403.3 951.7 404.1 951.3 404.7 950.8 405.0 950.2 405.0 949.6 404.8 948.1 403.9 945.7 402.5 942.4 400.4 938.1 397.8 934.1 395.2 930.3 392.8 926.7 390.5 923.3 388.3 920.2 386.7 917.3 385.6 914.6 385.0 912.1 385.0 910.3 385.0 909.0 385.0 908.4 385.0 899.4 378.7 887.2 370.0 879.8 364.9 876.7 363.2 874.5 363.6 874.8 365.8 877.4 368.2 884.5 373.7 896.6 382.6 906.5 392.7 907.3 395.1 908.6 397.5 910.6 399.9 913.1 402.4 916.2 404.9 919.5 407.6 923.0 410.5 926.7 413.5 930.5 416.7 933.5 419.3 935.6 421.1 936.9 422.3 937.3 422.8 937.5 423.3 937.3 423.9 936.9 424.5 936.3 425.1 935.4 425.6 934.2 425.8 932.9 425.8 931.3 425.6 929.5 425.4 927.7 425.2 925.7 424.9 923.6 424.5 921.5 424.2 919.5 423.9 917.6 423.6 915.8 423.3 913.9 423.3 912.0 423.5 910.0 424.0 908.1 424.7 906.4 425.2 905.1 425.5 904.1 425.5 903.5 425.2 903.0 425.1 902.7 424.9 902.5 424.9 873.6 397.2 847.3 371.2 838.7 362.9 835.8 360.8 833.5 360.4 833.9 362.7 836.0 365.6 844.3 374.2 870.3 400.5 898.3 430.4 898.6 431.0 898.6 432.0 898.3 433.3 897.8 435.0 897.1 436.9 896.6 438.9 896.4 440.8 896.4 442.7 896.7 444.5 897.0 446.4 897.3 448.4 897.6 450.5 898.0 452.6 898.3 454.6 898.5 456.4 898.7 458.2 898.9 459.8 898.9 461.1 898.7 462.3 898.2 463.2 897.6 463.8 897.0 464.2 896.4 464.4 895.9 464.2 895.4 463.8 894.2 462.5 892.4 460.4 889.8 457.4 886.6 453.6 883.6 449.9 880.7 446.4 878.0 443.1 875.5 440.0 873.0 437.5 870.6 435.5 868.2 434.2 865.8 433.4 864.1 432.8 862.9 432.5 862.3 432.3 855.7 423.5 846.8 411.4 841.3 404.3 838.9 401.7 836.7 401.4 836.3 403.6 838.0 406.7 843.1 414.1 851.8 426.3 858.1 439.0 858.1 441.5 858.7 444.2 859.8 447.1 861.4 450.2 863.6 453.6 865.9 457.2 868.3 461.0 870.9 465.0 873.5 469.3 875.6 472.6 877.0 475.0 877.9 476.5 878.1 477.1 878.1 477.7 877.8 478.2 877.2 478.6 876.4 479.0 875.4 479.2 874.3 479.0 873.0 478.6 871.5 478.0 869.9 477.2 868.2 476.4 866.4 475.5 864.5 474.5 862.7 473.6 860.9 472.6 859.2 471.8 857.5 471.0 855.7 470.4 853.8 470.0 851.8 469.8 849.7 469.9 848.0 469.9 846.7 469.7 845.8 469.4 845.2 469.0 844.8 468.7 844.5 468.5 844.4 468.4 825.4 433.1 808.4 400.3 802.8 389.7 800.8 386.8 798.7 385.7 798.3 388.0 799.4 391.4 804.7 402.2 821.3 435.2 838.7 472.3 838.7 473.0 838.4 473.9 837.8 475.1 836.8 476.5 835.5 478.1 834.4 479.8 833.6 481.6 833.1 483.4 832.8 485.2 832.4 487.1 832.1 489.1 831.8 491.2 831.5 493.3 831.2 495.3 830.8 497.1 830.5 498.9 830.2 500.4 829.7 501.7 829.2 502.7 828.5 503.4 827.7 503.9 827.0 504.1 826.4 504.0 825.9 503.7 825.6 503.2 824.9 501.6 823.8 499.0 822.3 495.4 820.4 490.7 818.6 486.3 817.0 482.1 815.4 478.1 814.0 474.4 812.4 471.2 810.7 468.6 808.9 466.6 806.9 465.2 805.4 464.1 804.4 463.3 803.9 463.0 800.3 452.6 795.6 438.3 792.5 429.9 791.0 426.7 789.0 425.7 788.0 427.7 788.7 431.1 791.2 439.8 795.7 454.1 797.8 468.1 797.0 470.5 796.7 473.2 796.9 476.3 797.5 479.8 798.5 483.6 799.6 487.8 800.7 492.1 801.9 496.7 803.1 501.6 804.0 505.4 804.7 508.2 805.0 509.9 805.0 510.5 804.9 511.0 804.4 511.4 803.7 511.6 802.8 511.8 801.8 511.6 800.8 511.1 799.7 510.3 798.5 509.3 797.2 508.1 795.9 506.8 794.4 505.3 792.9 503.8 791.5 502.3 790.0 500.9 788.6 499.6 787.3 498.3 785.8 497.1 784.1 496.2 782.3 495.4 780.2 494.9 778.6 494.3 777.4 493.7 776.6 493.2 776.2 492.6 775.9 492.2 775.8 491.9 775.7 491.7 768.5 452.4 762.5 415.9 760.4 404.0 759.4 400.7 757.7 399.0 756.6 401.1 756.7 404.6 758.4 416.5 764.0 453.1 769.0 493.7 768.8 494.4 768.3 495.2 767.3 496.1 765.9 497.1 764.2 498.3 762.7 499.6 761.4 501.0 760.3 502.5 759.4 504.2 758.5 505.9 757.6 507.7 756.6 509.6 755.7 511.5 754.8 513.3 753.9 514.9 753.0 516.5 752.2 517.9 751.4 518.9 750.6 519.7 749.7 520.2 748.8 520.4 748.0 520.3 747.5 520.1 747.2 519.7 747.0 519.0 746.8 517.3 746.6 514.5 746.3 510.6 745.9 505.6 745.6 500.9 745.3 496.4 745.1 492.1 744.9 488.1 744.4 484.6 743.6 481.6 742.4 479.1 741.0 477.1 739.9 475.6 739.2 474.6 738.8 474.1 738.7 463.1 738.5 448.1 738.2 439.1 737.8 435.6 736.2 434.1 734.6 435.6 734.2 439.1 733.9 448.1 733.8 463.1 731.4 477.1 730.0 479.1 728.8 481.6 728.0 484.6 727.5 488.1 727.3 492.1 727.1 496.4 726.8 500.9 726.5 505.6 726.1 510.6 725.8 514.5 725.6 517.3 725.4 519.0 725.2 519.7 724.9 520.1 724.4 520.3 723.6 520.4 722.7 520.2 721.8 519.7 721.0 518.9 720.2 517.9 719.4 516.5 718.5 514.9 717.6 513.3 716.7 511.5 715.8 509.6 714.8 507.7 713.9 505.9 713.0 504.2 712.1 502.5 711.0 501.0 709.7 499.6 708.2 498.3 706.5 497.1 705.1 496.1 704.1 495.2 703.6 494.4 703.4 493.7 703.2 493.2 703.1 492.9 703.1 492.7 708.4 453.1 714.0 416.5 715.7 404.6 715.8 401.1 714.7 399.0 713.0 400.7 712.0 404.0 709.9 415.9 703.9 452.4 696.2 492.6 695.8 493.2 695.0 493.7 693.8 494.3 692.2 494.9 690.1 495.4 688.3 496.2 686.6 497.1 685.1 498.3 683.8 499.6 682.4 500.9 680.9 502.3 679.5 503.8 678.0 505.3 676.5 506.8 675.2 508.1 673.9 509.3 672.7 510.3 671.6 511.1 670.6 511.6 669.6 511.8 668.7 511.6 668.0 511.4 667.5 511.0 667.4 510.5 667.4 509.9 667.7 508.2 668.4 505.4 669.3 501.6 670.5 496.7 671.7 492.1 672.8 487.8 673.9 483.6 674.9 479.8 675.5 476.3 675.7 473.2 675.4 470.5 674.6 468.1 674.0 466.3 673.7 465.2 673.5 464.6 676.7 454.1 681.2 439.8 683.7 431.1 684.4 427.7 683.4 425.7 681.4 426.7 679.9 429.9 676.8 438.3 672.1 452.6 665.5 465.2 663.5 466.6 661.7 468.6 660.0 471.2 658.4 474.4 657.0 478.1 655.4 482.1 653.8 486.3 652.0 490.7 650.1 495.4 648.6 499.0 647.5 501.6 646.8 503.2 646.5 503.7 646.0 504.0 645.4 504.1 644.7 503.9 643.9 503.4 643.2 502.7 642.7 501.7 642.2 500.4 641.9 498.9 641.6 497.1 641.2 495.3 640.9 493.3 640.6 491.2 640.3 489.1 640.0 487.1 639.6 485.2 639.3 483.4 638.8 481.6 638.0 479.8 636.9 478.1 635.6 476.5 634.6 475.1 634.0 473.9 633.7 473.0 633.7 472.3 633.7 471.8 633.7 471.4 633.7 471.3 651.1 435.2 667.7 402.2 673.0 391.4 674.1 388.0 673.7 385.7 671.6 386.8 669.6 389.7 664.0 400.3 647.0 433.1 627.2 469.0 626.6 469.4 625.7 469.7 624.4 469.9 622.7 469.9 620.6 469.8 618.6 470.0 616.7 470.4 614.9 471.0 613.2 471.8 611.5 472.6 609.7 473.6 607.9 474.5 606.0 475.5 604.2 476.4 602.5 477.2 600.9 478.0 599.4 478.6 598.1 479.0 597.0 479.2 596.0 479.0 595.2 478.6 594.6 478.2 594.3 477.7 594.3 477.1 594.5 476.5 595.4 475.0 596.8 472.6 598.9 469.3 601.5 465.0 604.1 461.0 606.5 457.2 608.8 453.6 611.0 450.2 612.6 447.1 613.7 444.2 614.3 441.5 614.3 439.0 614.3 437.2 614.3 435.9 614.3 435.3 620.6 426.3 629.3 414.1 634.4 406.7 636.1 403.6 635.7 401.4 633.5 401.7 631.1 404.3 625.6 411.4 616.7 423.5 606.6 433.4 604.2 434.2 601.8 435.5 599.4 437.5 596.9 440.0 594.4 443.1 591.7 446.4 588.8 449.9 585.8 453.6 582.6 457.4 580.0 460.4 578.2 462.5 577.0 463.8 576.5 464.2 576.0 464.4 575.4 464.2 574.8 463.8 574.2 463.2 573.7 462.3 573.5 461.1 573.5 459.8 573.7 458.2 573.9 456.4 574.1 454.6 574.4 452.6 574.8 450.5 575.1 448.4 575.4 446.4 575.7 444.5 576.0 442.7 576.0 440.8 575.8 438.9 575.3 436.9 574.6 435.0 574.1 433.3 573.8 432.0 573.8 431.0 574.1 430.4 574.2 429.9 574.4 429.6 574.4 429.4 602.1 400.5 628.1 374.2 636.4 365.6 638.5 362.7 638.9 360.4 636.6 360.8 633.7 362.9 625.1 371.2 598.8 397.2 568.9 425.2 568.3 425.5 567.3 425.5 566.0 425.2 564.3 424.7 562.4 424.0 560.4 423.5 558.5 423.3 556.6 423.3 554.8 423.6 552.9 423.9 550.9 424.2 548.8 424.5 546.7 424.9 544.7 425.2 542.9 425.4 541.1 425.6 539.5 425.8 538.2 425.8 537.0 425.6 536.1 425.1 535.5 424.5 535.1 423.9 534.9 423.3 535.1 422.8 535.5 422.3 536.8 421.1 538.9 419.3 541.9 416.7 545.7 413.5 549.4 410.5 552.9 407.6 556.2 404.9 559.3 402.4 561.8 399.9 563.8 397.5 565.1 395.1 565.9 392.7 566.5 391.0 566.8 389.8 567.0 389.2 575.8 382.6 587.9 373.7 595.0 368.2 597.6 365.8 597.9 363.6 595.7 363.2 592.6 364.9 585.2 370.0 573.0 378.7 560.3 385.0 557.8 385.0 555.1 385.6 552.2 386.7 549.1 388.3 545.7 390.5 542.1 392.8 538.3 395.2 534.3 397.8 530.0 400.4 526.7 402.5 524.3 403.9 522.8 404.8 522.2 405.0 521.6 405.0 521.1 404.7 520.7 404.1 520.3 403.3 520.1 402.3 520.3 401.2 520.7 399.9 521.3 398.4 522.1 396.8 522.9 395.1 523.8 393.3 524.8 391.4 525.7 389.6 526.7 387.8 527.5 386.1 528.3 384.4 528.9 382.6 529.3 380.7 529.5 378.7 529.4 376.6 529.4 374.9 529.6 373.6 529.9 372.7 530.3 372.1 530.6 371.7 530.8 371.4 530.9 371.3 566.2 352.3 599.0 335.3 609.6 329.7 612.5 327.7 613.6 325.6 611.3 325.2 607.9 326.3 597.1 331.6 564.1 348.2 527.0 365.6 526.3 365.6 525.4 365.3 524.2 364.7 522.8 363.7 521.2 362.4 519.5 361.3 517.7 360.5 515.9 360.0 514.1 359.7 512.2 359.3 510.2 359.0 508.1 358.7 506.0 358.4 504.0 358.1 502.2 357.7 500.4 357.4 498.9 357.1 497.6 356.6 496.6 356.1 495.9 355.4 495.4 354.6 495.2 353.9 495.3 353.3 495.6 352.8 496.1 352.5 497.7 351.8 500.3 350.7 503.9 349.2 508.6 347.3 513.0 345.5 517.2 343.9 521.2 342.3 524.9 340.9 528.1 339.3 530.7 337.6 532.7 335.8 534.1 333.8 535.2 332.3 536.0 331.3 536.3 330.8 546.7 327.2 561.0 322.5 569.4 319.4 572.6 317.9 573.6 315.9 571.6 314.9 568.2 315.6 559.5 318.1 545.2 322.6 531.2 324.7 528.8 323.9 526.1 323.6 523.0 323.8 519.5 324.4 515.7 325.4 511.5 326.5 507.2 327.6 502.6 328.8 497.7 330.0 493.9 330.9 491.1 331.6 489.4 331.9 488.8 331.9 488.3 331.8 487.9 331.3 487.7 330.6 487.5 329.7 487.7 328.7 488.2 327.7 489.0 326.6 490.0 325.4 491.2 324.1 492.5 322.8 494.0 321.3 495.5 319.8 497.0 318.4 498.4 316.9 499.7 315.5 501.0 314.2 502.2 312.7 503.1 311.0 503.9 309.2 504.4 307.1 505.0 305.5 505.6 304.3 506.1 303.5 506.7 303.1 507.1 302.8 507.4 302.7 507.6 302.6 546.9 295.4 583.4 289.4 595.3 287.3 598.6 286.3 600.3 284.6 598.2 283.5 594.7 283.6 582.8 285.3 546.2 290.9 505.6 295.9 504.9 295.7 504.1 295.2 503.2 294.2 502.2 292.8 501.0 291.1 499.7 289.6 498.3 288.3 496.8 287.2 495.1 286.3 493.4 285.4 491.6 284.5 489.7 283.5 487.8 282.6 486.0 281.7 484.4 280.8 482.8 279.9 481.4 279.1 480.4 278.3 479.6 277.5 479.1 276.6 478.9 275.7 479.0 274.9 479.2 274.4 479.6 274.1 480.3 273.9 482.0 273.7 484.8 273.5 488.7 273.2 493.7 272.8 498.5 272.5 503.0 272.2 507.2 272.0 511.2 271.8 514.7 271.3 517.7 270.5 520.2 269.3 522.2 267.9 523.7 266.8 524.7 266.1 525.2 265.7 536.2 265.6 551.2 265.4 560.2 265.1 563.7 264.7 565.2 263.1 563.7 261.5 560.2 261.1 551.2 260.8 536.2 260.7 522.2 258.3 520.2 256.9 517.7 255.7 514.7 254.9 511.2 254.4 507.2 254.2 503.0 254.0 498.5 253.7 493.7 253.4 488.7 253.0 484.8 252.7 482.0 252.5 480.3 252.3 479.6 252.1 479.2 251.8 479.0 251.3 478.9 250.5 479.1 249.6 479.6 248.7 480.4 247.9 481.4 247.1 482.8 246.3 484.4 245.4 486.0 244.5 487.8 243.6 489.7 242.7 491.6 241.7 493.4 240.8 495.1 239.9 496.8 239.0 498.3 237.9 499.7 236.6 501.0 235.1 502.2 233.4 503.2 232.0 504.1 231.0 504.9 230.5 505.6 230.3 506.1 230.1 506.4 230.0 506.6 230.0 546.2 235.3 582.8 240.9 594.7 242.6 598.2 242.7 600.3 241.6 598.6 239.9 595.3 238.9 583.4 236.8 546.9 230.8 506.7 223.1 506.1 222.7 505.6 221.9 505.0 220.7 504.4 219.1 503.9 217.0 503.1 215.2 502.2 213.5 501.0 212.0 499.7 210.7 498.4 209.3 497.0 207.8 495.5 206.4 494.0 204.9 492.5 203.4 491.2 202.1 490.0 200.8 489.0 199.6 488.2 198.5 487.7 197.5 487.5 196.5 487.7 195.6 487.9 194.9 488.3 194.4 488.8 194.3 489.4 194.3 491.1 194.6 493.9 195.3 497.7 196.2 502.6 197.4 507.2 198.6 511.5 199.7 515.7 200.8 519.5 201.8 523.0 202.4 526.1 202.6 528.8 202.3 531.2 201.5 533.0 200.9 534.1 200.6 534.7 200.4 545.2 203.6 559.5 208.1 568.2 210.6 571.6 211.3 573.6 210.3 572.6 208.3 569.4 206.8 561.0 203.7 546.7 199.0 534.1 192.4 532.7 190.4 530.7 188.6 528.1 186.9 524.9 185.3 521.2 183.9 517.2 182.3 513.0 180.7 508.6 178.9 503.9 177.0 500.3 175.5 497.7 174.4 496.1 173.7 495.6 173.4 495.3 172.9 495.2 172.3 495.4 171.6 495.9 170.8 496.6 170.1 497.6 169.6 498.9 169.1 500.4 168.8 502.2 168.5 504.0 168.1 506.0 167.8 508.1 167.5 510.2 167.2 512.2 166.9 514.1 166.5 515.9 166.2 517.7 165.7 519.5 164.9 521.2 163.8 522.8 162.5 524.2 161.5 525.4 160.9 526.3 160.6 527.0 160.6 527.5 160.6 527.9 160.6 528.0 160.6 564.1 178.0 597.1 194.6 607.9 199.9 611.3 201.0 613.6 200.6 612.5 198.5 609.6 196.5 599.0 190.9 566.2 173.9 530.3 154.1 529.9 153.5 529.6 152.6 529.4 151.3 529.4 149.6 529.5 147.5 529.3 145.5 528.9 143.6 528.3 141.8 527.5 140.1 526.7 138.4 525.7 136.6 524.8 134.8 523.8 132.9 522.9 131.1 522.1 129.4 521.3 127.8 520.7 126.3 520.3 125.0 520.1 123.9 520.3 122.9 520.7 122.1 521.1 121.5 521.6 121.2 522.2 121.2 522.8 121.4 524.3 122.3 526.7 123.7 530.0 125.8 534.3 128.4 538.3 131.0 542.1 133.4 545.7 135.7 549.1 137.9 552.2 139.5 555.1 140.6 557.8 141.2 560.3 141.2 562.1 141.2 563.4 141.2 564.0 141.2 573.0 147.5 585.2 156.2 592.6 161.3 595.7 163.0 597.9 162.6 597.6 160.4 595.0 158.0 587.9 152.5 575.8 143.6 565.9 133.5 565.1 131.1 563.8 128.7 561.8 126.3 559.3 123.8 556.2 121.3 552.9 118.6 549.4 115.7 545.7 112.7 541.9 109.5 538.9 106.9 536.8 105.1 535.5 103.9 535.1 103.4 534.9 102.9 535.1 102.3 535.5 101.7 536.1 101.1 537.0 100.6 538.2 100.4 539.5 100.4 541.1 100.6 542.9 100.8 544.7 101.0 546.7 101.3 548.8 101.7 550.9 102.0 552.9 102.3 554.8 102.6 556.6 102.9 558.5 102.9 560.4 102.7 562.4 102.2 564.3 101.5 566.0 101.0 567.3 100.7 568.3 100.7 568.9 101.0 569.4 101.1 569.7 101.3 569.9 101.3 598.8 129.0 625.1 155.0 633.7 163.3 636.6 165.4 638.9 165.8 638.5 163.5 636.4 160.6 628.1 152.0 602.1 125.7 574.1 95.8 573.8 95.2 573.8 94.2 574.1 92.9 574.6 91.2 575.3 89.3 575.8 87.3 576.0 85.4 576.0 83.5 575.7 81.7 575.4 79.8 575.1 77.8 574.8 75.7 574.4 73.6 574.1 71.6 573.9 69.8 573.7 68.0 573.5 66.4 573.5 65.1 573.7 63.9 574.2 63.0 574.8 62.4 575.4 62.0 576.0 61.8 576.5 62.0 577.0 62.4 578.2 63.7 580.0 65.8 582.6 68.8 585.8 72.6 588.8 76.3 591.7 79.8 594.4 83.1 596.9 86.2 599.4 88.7 601.8 90.7 604.2 92.0 606.6 92.8 608.3 93.4 609.5 93.7 610.1 93.9 616.7 102.7 625.6 114.8 631.1 121.9 633.5 124.5 635.7 124.8 636.1 122.6 634.4 119.5 629.3 112.1 620.6 99.9 614.3 87.2 614.3 84.7 613.7 82.0 612.6 79.1 611.0 76.0 608.8 72.6 606.5 69.0 604.1 65.2 601.5 61.2 598.9 56.9 596.8 53.6 595.4 51.2 594.5 49.7 594.3 49.1 594.3 48.5 594.6 48.0 595.2 47.6 596.0 47.2 597.0 47.0 598.1 47.2 599.4 47.6 600.9 48.2 602.5 49.0 604.2 49.8 606.0 50.7 607.9 51.7 609.7 52.6 611.5 53.6 613.2 54.4 614.9 55.2 616.7 55.8 618.6 56.2 620.6 56.4 622.7 56.3 624.4 56.3 625.7 56.5 626.6 56.8 627.2 57.2 627.6 57.5 627.9 57.7 628.0 57.8 647.0 93.1 664.0 125.9 669.6 136.5 671.6 139.4 673.7 140.5 674.1 138.2 673.0 134.8 667.7 124.0 651.1 91.0 633.7 53.9 633.7 53.2 634.0 52.3 634.6 51.1 635.6 49.7 636.9 48.1 638.0 46.4 638.8 44.6 639.3 42.8 639.6 41.0 640.0 39.1 640.3 37.1 640.6 35.0 640.9 32.9 641.2 30.9 641.6 29.1 641.9 27.3 642.2 25.8 642.7 24.5 643.2 23.5 643.9 22.8 644.7 22.3 645.4 22.1 646.0 22.2 646.5 22.5 646.8 23.0 647.5 24.6 648.6 27.2 650.1 30.8 652.0 35.5 653.8 39.9 655.4 44.1 657.0 48.1 658.4 51.8 660.0 55.0 661.7 57.6 663.5 59.6 665.5 61.0 667.0 62.1 668.0 62.9 668.5 63.2 672.1 73.6 676.8 87.9 679.9 96.3 681.4 99.5 683.4 100.5 684.4 98.5 683.7 95.1 681.2 86.4 676.7 72.1 674.6 58.1 675.4 55.7 675.7 53.0 675.5 49.9 674.9 46.4 673.9 42.6 672.8 38.4 671.7 34.1 670.5 29.5 669.3 24.6 668.4 20.8 667.7 18.0 667.4 16.3 667.4 15.7 667.5 15.2 668.0 14.8 668.7 14.6 669.6 14.4 670.6 14.6 671.6 15.1 672.7 15.9 673.9 16.9 675.2 18.1 676.5 19.4 678.0 20.9 679.5 22.4 680.9 23.9 682.4 25.3 683.8 26.6 685.1 27.9 686.6 29.1 688.3 30.0 690.1 30.8 692.2 31.3 693.8 31.9 695.0 32.5 695.8 33.0 696.2 33.6 696.5 34.0 696.6 34.3 696.7 34.5 703.9 73.8 709.9 110.3 712.0 122.2 713.0 125.5 714.7 127.2 715.8 125.1 715.7 121.6 714.0 109.7 708.4 73.1 703.4 32.5 703.6 31.8 704.1 31.0 705.1 30.1 706.5 29.1 708.2 27.9 709.7 26.6 711.0 25.2 712.1 23.7 713.0 22.0 713.9 20.3 714.8 18.5 715.8 16.6 716.7 14.7 717.6 12.9 718.5 11.3 719.4 9.7 720.2 8.3 721.0 7.3 721.8 6.5 722.7 6.0 723.6 5.8 724.4 5.9 724.9 6.1 725.2 6.5 725.4 7.2 725.6 8.9 725.8 11.7 726.1 15.6 726.5 20.6 726.8 25.4 727.1 29.9 727.3 34.1 727.5 38.1 728.0 41.6 728.8 44.6 730.0 47.1 731.4 49.1 732.5 50.6 733.2 51.6 733.6 52.1 733.8 63.1 733.9 78.1 734.2 87.1 734.6 90.6 736.2 92.1 737.8 90.6 738.2 87.1 738.5 78.1 738.7 63.1 741.0 49.1 742.4 47.1 743.6 44.6 744.4 41.6 744.9 38.1 745.1 34.1 745.3 29.9 745.6 25.4 745.9 20.6 746.3 15.6 746.6 11.7 746.8 8.9 747.0 7.2 747.2 6.5 747.5 6.1 748.0 5.9 748.8 5.8 749.7 6.0 750.6 6.5 751.4 7.3 752.2 8.3 753.0 9.7 753.9 11.3 754.8 12.9 755.7 14.7 756.6 16.6 757.6 18.5 758.5 20.3 759.4 22.0 760.3 23.7 761.4 25.2 762.7 26.6 764.2 27.9 765.9 29.1 767.3 30.1 768.3 31.0 768.8 31.8 769.0 32.5 769.2 33.0 769.3 33.3 769.3 33.5 764.0 73.1 758.4 109.7 756.7 121.6 756.6 125.1 757.7 127.2 759.4 125.5 760.4 122.2 762.5 110.3 768.5 73.8 776.2 33.6 776.6 33.0 777.4 32.5 778.6 31.9 780.2 31.3 782.3 30.8 784.1 30.0 785.8 29.1 787.3 27.9 788.6 26.6 790.0 25.3 791.5 23.9 792.9 22.4 794.4 20.9 795.9 19.4 797.2 18.1 798.5 16.9 799.7 15.9 800.8 15.1 801.8 14.6 802.8 14.4 803.7 14.6 804.4 14.8 804.9 15.2 805.0 15.7 805.0 16.3 804.7 18.0 804.0 20.8 803.1 24.6 801.9 29.5 800.7 34.1 799.6 38.4 798.5 42.6 797.5 46.4 796.9 49.9 796.7 53.0 797.0 55.7 797.8 58.1 798.4 59.9 798.7 61.0 798.9 61.6 795.7 72.1 791.2 86.4 788.7 95.1 788.0 98.5 789.0 100.5 791.0 99.5 792.5 96.3 795.6 87.9 800.3 73.6 806.9 61.0 808.9 59.6 810.7 57.6 812.4 55.0 814.0 51.8 815.4 48.1 817.0 44.1 818.6 39.9 820.4 35.5 822.3 30.8 823.8 27.2 824.9 24.6 825.6 23.0 825.9 22.5 826.4 22.2 827.0 22.1 827.7 22.3 828.5 22.8 829.2 23.5 829.7 24.5 830.2 25.8 830.5 27.3 830.8 29.1 831.2 30.9 831.5 32.9 831.8 35.0 832.1 37.1 832.4 39.1 832.8 41.0 833.1 42.8 833.6 44.6 834.4 46.4 835.5 48.1 836.8 49.7 837.8 51.1 838.4 52.3 838.7 53.2 838.7 53.9 838.7 54.4 838.7 54.8 838.7 54.9 821.3 91.0 804.7 124.0 799.4 134.8 798.3 138.2 798.7 140.5 800.8 139.4 802.8 136.5 808.4 125.9 825.4 93.1 845.2 57.2 845.8 56.8 846.7 56.5 848.0 56.3 849.7 56.3 851.8 56.4 853.8 56.2 855.7 55.8 857.5 55.2 859.2 54.4 860.9 53.6 862.7 52.6 864.5 51.7 866.4 50.7 868.2 49.8 869.9 49.0 871.5 48.2 873.0 47.6 874.3 47.2 875.4 47.0 876.4 47.2 877.2 47.6 877.8 48.0 878.1 48.5 878.1 49.1 877.9 49.7 877.0 51.2 875.6 53.6 873.5 56.9 870.9 61.2 868.3 65.2 865.9 69.0 863.6 72.6 861.4 76.0 859.8 79.1 858.7 82.0 858.1 84.7 858.1 87.2 858.1 89.0 858.1 90.3 858.1 90.9 851.8 99.9 843.1 112.1 838.0 119.5 836.3 122.6 836.7 124.8 838.9 124.5 841.3 121.9 846.8 114.8 855.7 102.7 865.8 92.8 868.2 92.0 870.6 90.7 873.0 88.7 875.5 86.2 878.0 83.1 880.7 79.8 883.6 76.3 886.6 72.6 889.8 68.8 892.4 65.8 894.2 63.7 895.4 62.4 895.9 62.0 896.4 61.8 897.0 62.0 897.6 62.4 898.2 63.0 898.7 63.9 898.9 65.1 898.9 66.4 898.7 68.0 898.5 69.8 898.3 71.6 898.0 73.6 897.6 75.7 897.3 77.8 897.0 79.8 896.7 81.7 896.4 83.5 896.4 85.4 896.6 87.3 897.1 89.3 897.8 91.2 898.3 92.9 898.6 94.2 898.6 95.2 898.3 95.8 898.2 96.3 898.0 96.6 898.0 96.8 870.3 125.7 844.3 152.0 836.0 160.6 833.9 163.5 833.5 165.8 835.8 165.4 838.7 163.3 847.3 155.0 873.6 129.0 903.5 101.0 904.1 100.7 905.1 100.7 906.4 101.0 908.1 101.5 910.0 102.2 912.0 102.7 913.9 102.9 915.8 102.9 917.6 102.6 919.5 102.3 921.5 102.0 923.6 101.7 925.7 101.3 927.7 101.0 929.5 100.8 931.3 100.6 932.9 100.4 934.2 100.4 935.4 100.6 936.3 101.1 936.9 101.7 937.3 102.3 937.5 102.9 937.3 103.4 936.9 103.9 935.6 105.1 933.5 106.9 930.5 109.5 926.7 112.7 923.0 115.7 919.5 118.6 916.2 121.3 913.1 123.8 910.6 126.3 908.6 128.7 907.3 131.1 906.5 133.5 905.9 135.2 905.6 136.4 905.4 137.0 896.6 143.6 884.5 152.5 877.4 158.0 874.8 160.4 874.5 162.6 876.7 163.0 879.8 161.3 887.2 156.2 899.4 147.5 912.1 141.2 914.6 141.2 917.3 140.6 920.2 139.5 923.3 137.9 926.7 135.7 930.3 133.4 934.1 131.0 938.1 128.4 942.4 125.8 945.7 123.7 948.1 122.3 949.6 121.4 950.2 121.2 950.8 121.2 951.3 121.5 951.7 122.1 952.1 122.9 952.3 123.9 952.1 125.0 951.7 126.3 951.1 127.8 950.3 129.4 949.5 131.1 948.6 132.9 947.6 134.8 946.7 136.6 945.7 138.4 944.9 140.1 944.1 141.8 943.5 143.6 943.1 145.5 942.9 147.5 943.0 149.6 943.0 151.3 942.8 152.6 942.5 153.5 942.1 154.1 941.8 154.5 941.6 154.8 941.5 154.9 906.2 173.9 873.4 190.9 862.8 196.5 859.9 198.5 858.8 200.6 861.1 201.0 864.5 199.9 875.3 194.6 908.3 178.0 945.4 160.6 946.1 160.6 947.0 160.9 948.2 161.5 949.6 162.5 951.2 163.8 952.9 164.9 954.7 165.7 956.5 166.2 958.3 166.5 960.2 166.9 962.2 167.2 964.3 167.5 966.4 167.8 968.4 168.1 970.2 168.5 972.0 168.8 973.5 169.1 974.8 169.6 975.8 170.1 976.5 170.8 977.0 171.6 977.2 172.3 977.1 172.9 976.8 173.4 976.3 173.7 974.7 174.4 972.1 175.5 968.5 177.0 963.8 178.9 959.4 180.7 955.2 182.3 951.2 183.9 947.5 185.3 944.3 186.9 941.7 188.6 939.7 190.4 938.3 192.4 937.2 193.9 936.4 194.9 936.1 195.4 925.7 199.0 911.4 203.7 903.0 206.8 899.8 208.3 898.8 210.3 900.8 211.3 904.2 210.6 912.9 208.1 927.2 203.6 941.2 201.5 943.6 202.3 946.3 202.6 949.4 202.4 952.9 201.8 956.7 200.8 960.9 199.7 965.2 198.6 969.8 197.4 974.7 196.2 978.5 195.3 981.3 194.6 983.0 194.3 983.6 194.3 984.1 194.4 984.5 194.9 984.7 195.6 984.9 196.5 984.7 197.5 984.2 198.5 983.4 199.6 982.4 200.8 981.2 202.1 979.9 203.4 978.4 204.9 976.9 206.4 975.4 207.8 974.0 209.3 972.7 210.7 971.4 212.0 970.2 213.5 969.3 215.2 968.5 217.0 968.0 219.1 967.4 220.7 966.8 221.9 966.3 222.7 965.7 223.1 965.3 223.4 965.0 223.5 964.8 223.6 925.5 230.8 889.0 236.8 877.1 238.9 873.8 239.9 872.1 241.6 874.2 242.7 877.7 242.6 889.6 240.9 926.2 235.3 966.8 230.3 967.5 230.5 968.3 231.0 969.2 232.0 970.2 233.4 971.4 235.1 972.7 236.6 974.1 237.9 975.6 239.0 977.3 239.9 979.0 240.8 980.8 241.7 982.7 242.7 984.6 243.6 986.4 244.5 988.0 245.4 989.6 246.3 991.0 247.1 992.0 247.9 992.8 248.7 993.3 249.6 993.5 250.5 993.4 251.3 993.2 251.8 992.8 252.1 992.1 252.3 990.4 252.5 987.6 252.7 983.7 253.0 978.7 253.4 974.0 253.7 969.5 254.0 965.2 254.2 961.2 254.4 957.7 254.9 954.7 255.7 952.2 256.9 950.2 258.3 948.7 259.4 947.7 260.1 947.2 260.5 936.2 260.6 921.2 260.8 912.2 261.1 908.7 261.5Z M852.8 268.6 849.5 268.5 846.3 269.3 843.5 270.9 841.1 273.2 839.4 276.1 838.4 279.3 838.3 282.6 839.1 285.9 840.6 288.8 842.9 291.2 845.6 293.0 848.8 293.9 845.4 304.4 842.3 303.3 839.0 303.0 835.8 303.7 832.8 305.1 830.3 307.3 828.4 310.1 827.3 313.2 827.0 316.6 827.6 319.8 829.0 322.8 831.1 325.3 833.7 327.2 827.3 336.1 824.7 334.1 821.6 332.9 818.4 332.5 815.1 332.9 812.0 334.2 809.4 336.3 807.3 338.9 806.0 342.0 805.6 345.3 806.0 348.5 807.2 351.6 809.2 354.2 800.3 360.6 798.4 358.0 795.9 355.9 792.9 354.5 789.7 353.9 786.3 354.2 783.2 355.3 780.4 357.2 778.2 359.7 776.8 362.7 776.1 365.9 776.4 369.2 777.5 372.3 767.0 375.7 766.1 372.5 764.3 369.8 761.9 367.5 759.0 366.0 755.7 365.2 752.4 365.3 749.2 366.3 746.3 368.0 744.0 370.4 742.4 373.2 741.6 376.4 741.7 379.7 730.7 379.7 730.8 376.4 730.0 373.2 728.4 370.4 726.1 368.0 723.2 366.3 720.0 365.3 716.7 365.2 713.4 366.0 710.5 367.5 708.1 369.8 706.3 372.5 705.4 375.7 694.9 372.3 696.0 369.2 696.3 365.9 695.6 362.7 694.2 359.7 692.0 357.2 689.2 355.3 686.1 354.2 682.7 353.9 679.5 354.5 676.5 355.9 674.0 358.0 672.1 360.6 663.2 354.2 665.2 351.6 666.4 348.5 666.8 345.3 666.4 342.0 665.1 338.9 663.0 336.3 660.4 334.2 657.3 332.9 654.0 332.5 650.8 332.9 647.7 334.1 645.1 336.1 638.7 327.2 641.3 325.3 643.4 322.8 644.8 319.8 645.4 316.6 645.1 313.2 644.0 310.1 642.1 307.3 639.6 305.1 636.6 303.7 633.4 303.0 630.1 303.3 627.0 304.4 623.6 293.9 626.8 293.0 629.5 291.2 631.8 288.8 633.3 285.9 634.1 282.6 634.0 279.3 633.0 276.1 631.3 273.2 628.9 270.9 626.1 269.3 622.9 268.5 619.6 268.6 619.6 257.6 622.9 257.7 626.1 256.9 628.9 255.3 631.3 253.0 633.0 250.1 634.0 246.9 634.1 243.6 633.3 240.3 631.8 237.4 629.5 235.0 626.8 233.2 623.6 232.3 627.0 221.8 630.1 222.9 633.4 223.2 636.6 222.5 639.6 221.1 642.1 218.9 644.0 216.1 645.1 213.0 645.4 209.6 644.8 206.4 643.4 203.4 641.3 200.9 638.7 199.0 645.1 190.1 647.7 192.1 650.8 193.3 654.0 193.7 657.3 193.3 660.4 192.0 663.0 189.9 665.1 187.3 666.4 184.2 666.8 180.9 666.4 177.7 665.2 174.6 663.2 172.0 672.1 165.6 674.0 168.2 676.5 170.3 679.5 171.7 682.7 172.3 686.1 172.0 689.2 170.9 692.0 169.0 694.2 166.5 695.6 163.5 696.3 160.3 696.0 157.0 694.9 153.9 705.4 150.5 706.3 153.7 708.1 156.4 710.5 158.7 713.4 160.2 716.7 161.0 720.0 160.9 723.2 159.9 726.1 158.2 728.4 155.8 730.0 153.0 730.8 149.8 730.7 146.5 741.7 146.5 741.6 149.8 742.4 153.0 744.0 155.8 746.3 158.2 749.2 159.9 752.4 160.9 755.7 161.0 759.0 160.2 761.9 158.7 764.3 156.4 766.1 153.7 767.0 150.5 777.5 153.9 776.4 157.0 776.1 160.3 776.8 163.5 778.2 166.5 780.4 169.0 783.2 170.9 786.3 172.0 789.7 172.3 792.9 171.7 795.9 170.3 798.4 168.2 800.3 165.6 809.2 172.0 807.2 174.6 806.0 177.7 805.6 180.9 806.0 184.2 807.3 187.3 809.4 189.9 812.0 192.0 815.1 193.3 818.4 193.7 821.6 193.3 824.7 192.1 827.3 190.1 833.7 199.0 831.1 200.9 829.0 203.4 827.6 206.4 827.0 209.6 827.3 213.0 828.4 216.1 830.3 218.9 832.8 221.1 835.8 222.5 839.0 223.2 842.3 222.9 845.4 221.8 848.8 232.3 845.6 233.2 842.9 235.0 840.6 237.4 839.1 240.3 838.3 243.6 838.4 246.9 839.4 250.1 841.1 253.0 843.5 255.3 846.3 256.9 849.5 257.7 852.8 257.6Z"/></clipPath><radialGradient id="sph" cx="0.45" cy="0.4" r="0.6"><stop offset="0" stop-color="#cacaca"/><stop offset="0.6" stop-color="#b4b4b4"/><stop offset="1" stop-color="#909090"/></radialGradient></defs>
<g clip-path="url(#fl)">
<linearGradient id="bd0" gradientUnits="userSpaceOnUse" x1="916.2" y1="253.1" x2="916.2" y2="273.1"><stop offset="0" stop-color="#3c3c3c" stop-opacity="0"/><stop offset="0.22" stop-color="#3c3c3c"/><stop offset="0.78" stop-color="#3c3c3c"/><stop offset="1" stop-color="#3c3c3c" stop-opacity="0"/></linearGradient>
<path d="M851.7 257.6 886.2 255.6 916.2 254.1 951.2 254.1 998.2 254.6 998.2 271.6 951.2 272.1 916.2 272.1 886.2 270.6 851.7 268.6Z" fill="url(#bd0)"/>
<linearGradient id="bd1" gradientUnits="userSpaceOnUse" x1="910.5" y1="309.2" x2="904.3" y2="328.2"><stop offset="0" stop-color="#3c3c3c" stop-opacity="0"/><stop offset="0.22" stop-color="#3c3c3c"/><stop offset="0.78" stop-color="#3c3c3c"/><stop offset="1" stop-color="#3c3c3c" stop-opacity="0"/></linearGradient>
<path d="M847.7 293.6 881.2 302.3 910.2 310.2 943.5 321.0 988.0 336.0 982.8 352.1 937.9 338.1 904.6 327.3 876.5 316.6 844.3 304.0Z" fill="url(#bd1)"/>
<linearGradient id="bd2" gradientUnits="userSpaceOnUse" x1="887.7" y1="360.8" x2="875.9" y2="377.0"><stop offset="0" stop-color="#3c3c3c" stop-opacity="0"/><stop offset="0.22" stop-color="#3c3c3c"/><stop offset="0.78" stop-color="#3c3c3c"/><stop offset="1" stop-color="#3c3c3c" stop-opacity="0"/></linearGradient>
<path d="M832.9 326.5 862.0 345.2 887.1 361.6 915.4 382.2 953.2 410.2 943.2 424.0 904.8 396.8 876.5 376.2 853.1 357.3 826.4 335.4Z" fill="url(#bd2)"/>
<linearGradient id="bd3" gradientUnits="userSpaceOnUse" x1="850.1" y1="402.8" x2="833.9" y2="414.6"><stop offset="0" stop-color="#3c3c3c" stop-opacity="0"/><stop offset="0.22" stop-color="#3c3c3c"/><stop offset="0.78" stop-color="#3c3c3c"/><stop offset="1" stop-color="#3c3c3c" stop-opacity="0"/></linearGradient>
<path d="M808.5 353.3 830.4 380.0 849.3 403.4 869.9 431.7 897.1 470.1 883.3 480.1 855.3 442.3 834.7 414.0 818.3 388.9 799.6 359.8Z" fill="url(#bd3)"/>
<linearGradient id="bd4" gradientUnits="userSpaceOnUse" x1="801.3" y1="431.2" x2="782.3" y2="437.4"><stop offset="0" stop-color="#3c3c3c" stop-opacity="0"/><stop offset="0.22" stop-color="#3c3c3c"/><stop offset="0.78" stop-color="#3c3c3c"/><stop offset="1" stop-color="#3c3c3c" stop-opacity="0"/></linearGradient>
<path d="M777.1 371.2 789.7 403.4 800.4 431.5 811.2 464.8 825.2 509.7 809.1 514.9 794.1 470.4 783.3 437.1 775.4 408.1 766.7 374.6Z" fill="url(#bd4)"/>
<linearGradient id="bd5" gradientUnits="userSpaceOnUse" x1="746.2" y1="443.1" x2="726.2" y2="443.1"><stop offset="0" stop-color="#3c3c3c" stop-opacity="0"/><stop offset="0.22" stop-color="#3c3c3c"/><stop offset="0.78" stop-color="#3c3c3c"/><stop offset="1" stop-color="#3c3c3c" stop-opacity="0"/></linearGradient>
<path d="M741.7 378.6 743.7 413.1 745.2 443.1 745.2 478.1 744.7 525.1 727.7 525.1 727.2 478.1 727.2 443.1 728.7 413.1 730.7 378.6Z" fill="url(#bd5)"/>
<linearGradient id="bd6" gradientUnits="userSpaceOnUse" x1="690.1" y1="437.4" x2="671.1" y2="431.2"><stop offset="0" stop-color="#3c3c3c" stop-opacity="0"/><stop offset="0.22" stop-color="#3c3c3c"/><stop offset="0.78" stop-color="#3c3c3c"/><stop offset="1" stop-color="#3c3c3c" stop-opacity="0"/></linearGradient>
<path d="M705.7 374.6 697.0 408.1 689.1 437.1 678.3 470.4 663.3 514.9 647.2 509.7 661.2 464.8 672.0 431.5 682.7 403.4 695.3 371.2Z" fill="url(#bd6)"/>
<linearGradient id="bd7" gradientUnits="userSpaceOnUse" x1="638.5" y1="414.6" x2="622.3" y2="402.8"><stop offset="0" stop-color="#3c3c3c" stop-opacity="0"/><stop offset="0.22" stop-color="#3c3c3c"/><stop offset="0.78" stop-color="#3c3c3c"/><stop offset="1" stop-color="#3c3c3c" stop-opacity="0"/></linearGradient>
<path d="M672.8 359.8 654.1 388.9 637.7 414.0 617.1 442.3 589.1 480.1 575.3 470.1 602.5 431.7 623.1 403.4 642.0 380.0 663.9 353.3Z" fill="url(#bd7)"/>
<linearGradient id="bd8" gradientUnits="userSpaceOnUse" x1="596.5" y1="377.0" x2="584.7" y2="360.8"><stop offset="0" stop-color="#3c3c3c" stop-opacity="0"/><stop offset="0.22" stop-color="#3c3c3c"/><stop offset="0.78" stop-color="#3c3c3c"/><stop offset="1" stop-color="#3c3c3c" stop-opacity="0"/></linearGradient>
<path d="M646.0 335.4 619.3 357.3 595.9 376.2 567.6 396.8 529.2 424.0 519.2 410.2 557.0 382.2 585.3 361.6 610.4 345.2 639.5 326.5Z" fill="url(#bd8)"/>
<linearGradient id="bd9" gradientUnits="userSpaceOnUse" x1="568.1" y1="328.2" x2="561.9" y2="309.2"><stop offset="0" stop-color="#3c3c3c" stop-opacity="0"/><stop offset="0.22" stop-color="#3c3c3c"/><stop offset="0.78" stop-color="#3c3c3c"/><stop offset="1" stop-color="#3c3c3c" stop-opacity="0"/></linearGradient>
<path d="M628.1 304.0 595.9 316.6 567.8 327.3 534.5 338.1 489.6 352.1 484.4 336.0 528.9 321.0 562.2 310.2 591.2 302.3 624.7 293.6Z" fill="url(#bd9)"/>
<linearGradient id="bd10" gradientUnits="userSpaceOnUse" x1="556.2" y1="273.1" x2="556.2" y2="253.1"><stop offset="0" stop-color="#3c3c3c" stop-opacity="0"/><stop offset="0.22" stop-color="#3c3c3c"/><stop offset="0.78" stop-color="#3c3c3c"/><stop offset="1" stop-color="#3c3c3c" stop-opacity="0"/></linearGradient>
<path d="M620.7 268.6 586.2 270.6 556.2 272.1 521.2 272.1 474.2 271.6 474.2 254.6 521.2 254.1 556.2 254.1 586.2 255.6 620.7 257.6Z" fill="url(#bd10)"/>
<linearGradient id="bd11" gradientUnits="userSpaceOnUse" x1="561.9" y1="217.0" x2="568.1" y2="198.0"><stop offset="0" stop-color="#3c3c3c" stop-opacity="0"/><stop offset="0.22" stop-color="#3c3c3c"/><stop offset="0.78" stop-color="#3c3c3c"/><stop offset="1" stop-color="#3c3c3c" stop-opacity="0"/></linearGradient>
<path d="M624.7 232.6 591.2 223.9 562.2 216.0 528.9 205.2 484.4 190.2 489.6 174.1 534.5 188.1 567.8 198.9 595.9 209.6 628.1 222.2Z" fill="url(#bd11)"/>
<linearGradient id="bd12" gradientUnits="userSpaceOnUse" x1="584.7" y1="165.4" x2="596.5" y2="149.2"><stop offset="0" stop-color="#3c3c3c" stop-opacity="0"/><stop offset="0.22" stop-color="#3c3c3c"/><stop offset="0.78" stop-color="#3c3c3c"/><stop offset="1" stop-color="#3c3c3c" stop-opacity="0"/></linearGradient>
<path d="M639.5 199.7 610.4 181.0 585.3 164.6 557.0 144.0 519.2 116.0 529.2 102.2 567.6 129.4 595.9 150.0 619.3 168.9 646.0 190.8Z" fill="url(#bd12)"/>
<linearGradient id="bd13" gradientUnits="userSpaceOnUse" x1="622.3" y1="123.4" x2="638.5" y2="111.6"><stop offset="0" stop-color="#3c3c3c" stop-opacity="0"/><stop offset="0.22" stop-color="#3c3c3c"/><stop offset="0.78" stop-color="#3c3c3c"/><stop offset="1" stop-color="#3c3c3c" stop-opacity="0"/></linearGradient>
<path d="M663.9 172.9 642.0 146.2 623.1 122.8 602.5 94.5 575.3 56.1 589.1 46.1 617.1 83.9 637.7 112.2 654.1 137.3 672.8 166.4Z" fill="url(#bd13)"/>
<linearGradient id="bd14" gradientUnits="userSpaceOnUse" x1="671.1" y1="95.0" x2="690.1" y2="88.8"><stop offset="0" stop-color="#3c3c3c" stop-opacity="0"/><stop offset="0.22" stop-color="#3c3c3c"/><stop offset="0.78" stop-color="#3c3c3c"/><stop offset="1" stop-color="#3c3c3c" stop-opacity="0"/></linearGradient>
<path d="M695.3 155.0 682.7 122.8 672.0 94.7 661.2 61.4 647.2 16.5 663.3 11.3 678.3 55.8 689.1 89.1 697.0 118.1 705.7 151.6Z" fill="url(#bd14)"/>
<linearGradient id="bd15" gradientUnits="userSpaceOnUse" x1="726.2" y1="83.1" x2="746.2" y2="83.1"><stop offset="0" stop-color="#3c3c3c" stop-opacity="0"/><stop offset="0.22" stop-color="#3c3c3c"/><stop offset="0.78" stop-color="#3c3c3c"/><stop offset="1" stop-color="#3c3c3c" stop-opacity="0"/></linearGradient>
<path d="M730.7 147.6 728.7 113.1 727.2 83.1 727.2 48.1 727.7 1.1 744.7 1.1 745.2 48.1 745.2 83.1 743.7 113.1 741.7 147.6Z" fill="url(#bd15)"/>
<linearGradient id="bd16" gradientUnits="userSpaceOnUse" x1="782.3" y1="88.8" x2="801.3" y2="95.0"><stop offset="0" stop-color="#3c3c3c" stop-opacity="0"/><stop offset="0.22" stop-color="#3c3c3c"/><stop offset="0.78" stop-color="#3c3c3c"/><stop offset="1" stop-color="#3c3c3c" stop-opacity="0"/></linearGradient>
<path d="M766.7 151.6 775.4 118.1 783.3 89.1 794.1 55.8 809.1 11.3 825.2 16.5 811.2 61.4 800.4 94.7 789.7 122.8 777.1 155.0Z" fill="url(#bd16)"/>
<linearGradient id="bd17" gradientUnits="userSpaceOnUse" x1="833.9" y1="111.6" x2="850.1" y2="123.4"><stop offset="0" stop-color="#3c3c3c" stop-opacity="0"/><stop offset="0.22" stop-color="#3c3c3c"/><stop offset="0.78" stop-color="#3c3c3c"/><stop offset="1" stop-color="#3c3c3c" stop-opacity="0"/></linearGradient>
<path d="M799.6 166.4 818.3 137.3 834.7 112.2 855.3 83.9 883.3 46.1 897.1 56.1 869.9 94.5 849.3 122.8 830.4 146.2 808.5 172.9Z" fill="url(#bd17)"/>
<linearGradient id="bd18" gradientUnits="userSpaceOnUse" x1="875.9" y1="149.2" x2="887.7" y2="165.4"><stop offset="0" stop-color="#3c3c3c" stop-opacity="0"/><stop offset="0.22" stop-color="#3c3c3c"/><stop offset="0.78" stop-color="#3c3c3c"/><stop offset="1" stop-color="#3c3c3c" stop-opacity="0"/></linearGradient>
<path d="M826.4 190.8 853.1 168.9 876.5 150.0 904.8 129.4 943.2 102.2 953.2 116.0 915.4 144.0 887.1 164.6 862.0 181.0 832.9 199.7Z" fill="url(#bd18)"/>
<linearGradient id="bd19" gradientUnits="userSpaceOnUse" x1="904.3" y1="198.0" x2="910.5" y2="217.0"><stop offset="0" stop-color="#3c3c3c" stop-opacity="0"/><stop offset="0.22" stop-color="#3c3c3c"/><stop offset="0.78" stop-color="#3c3c3c"/><stop offset="1" stop-color="#3c3c3c" stop-opacity="0"/></linearGradient>
<path d="M844.3 222.2 876.5 209.6 904.6 198.9 937.9 188.1 982.8 174.1 988.0 190.2 943.5 205.2 910.2 216.0 881.2 223.9 847.7 232.6Z" fill="url(#bd19)"/>
<radialGradient id="shd" gradientUnits="userSpaceOnUse" cx="736.2" cy="263.1" r="260"><stop offset="0.43" stop-color="#000" stop-opacity="0.36"/><stop offset="0.55" stop-color="#000" stop-opacity="0.17"/><stop offset="0.7" stop-color="#000" stop-opacity="0"/><stop offset="0.86" stop-color="#fff" stop-opacity="0"/><stop offset="0.99" stop-color="#fff" stop-opacity="0.3"/></radialGradient>
</g>
<circle cx="736.2" cy="263.1" r="260" fill="url(#shd)" clip-path="url(#fl2)"/>
<radialGradient id="caprim"><stop offset="0.55" stop-color="#000" stop-opacity="0"/><stop offset="0.85" stop-color="#000" stop-opacity="0.16"/><stop offset="1" stop-color="#000" stop-opacity="0"/></radialGradient>
<g clip-path="url(#fl2)">
<circle cx="849.3" cy="281.0" r="14" fill="url(#caprim)"/>
<circle cx="838.2" cy="315.1" r="14" fill="url(#caprim)"/>
<circle cx="817.2" cy="344.1" r="14" fill="url(#caprim)"/>
<circle cx="788.2" cy="365.1" r="14" fill="url(#caprim)"/>
<circle cx="754.1" cy="376.2" r="14" fill="url(#caprim)"/>
<circle cx="718.3" cy="376.2" r="14" fill="url(#caprim)"/>
<circle cx="684.2" cy="365.1" r="14" fill="url(#caprim)"/>
<circle cx="655.2" cy="344.1" r="14" fill="url(#caprim)"/>
<circle cx="634.2" cy="315.1" r="14" fill="url(#caprim)"/>
<circle cx="623.1" cy="281.0" r="14" fill="url(#caprim)"/>
<circle cx="623.1" cy="245.2" r="14" fill="url(#caprim)"/>
<circle cx="634.2" cy="211.1" r="14" fill="url(#caprim)"/>
<circle cx="655.2" cy="182.1" r="14" fill="url(#caprim)"/>
<circle cx="684.2" cy="161.1" r="14" fill="url(#caprim)"/>
<circle cx="718.3" cy="150.0" r="14" fill="url(#caprim)"/>
<circle cx="754.1" cy="150.0" r="14" fill="url(#caprim)"/>
<circle cx="788.2" cy="161.1" r="14" fill="url(#caprim)"/>
<circle cx="817.2" cy="182.1" r="14" fill="url(#caprim)"/>
<circle cx="838.2" cy="211.1" r="14" fill="url(#caprim)"/>
<circle cx="849.3" cy="245.2" r="14" fill="url(#caprim)"/>
</g>
<circle cx="847.3" cy="280.7" r="5.8" fill="url(#sph)"/>
<circle cx="836.4" cy="314.2" r="5.8" fill="url(#sph)"/>
<circle cx="815.7" cy="342.6" r="5.8" fill="url(#sph)"/>
<circle cx="787.3" cy="363.3" r="5.8" fill="url(#sph)"/>
<circle cx="753.8" cy="374.2" r="5.8" fill="url(#sph)"/>
<circle cx="718.6" cy="374.2" r="5.8" fill="url(#sph)"/>
<circle cx="685.1" cy="363.3" r="5.8" fill="url(#sph)"/>
<circle cx="656.7" cy="342.6" r="5.8" fill="url(#sph)"/>
<circle cx="636.0" cy="314.2" r="5.8" fill="url(#sph)"/>
<circle cx="625.1" cy="280.7" r="5.8" fill="url(#sph)"/>
<circle cx="625.1" cy="245.5" r="5.8" fill="url(#sph)"/>
<circle cx="636.0" cy="212.0" r="5.8" fill="url(#sph)"/>
<circle cx="656.7" cy="183.6" r="5.8" fill="url(#sph)"/>
<circle cx="685.1" cy="162.9" r="5.8" fill="url(#sph)"/>
<circle cx="718.6" cy="152.0" r="5.8" fill="url(#sph)"/>
<circle cx="753.8" cy="152.0" r="5.8" fill="url(#sph)"/>
<circle cx="787.3" cy="162.9" r="5.8" fill="url(#sph)"/>
<circle cx="815.7" cy="183.6" r="5.8" fill="url(#sph)"/>
<circle cx="836.4" cy="212.0" r="5.8" fill="url(#sph)"/>
<circle cx="847.3" cy="245.5" r="5.8" fill="url(#sph)"/>
<g clip-path="url(#fl)" fill="none"><use href="#ctr" stroke="#b83caa" stroke-width="4.8"/>
<use href="#ctr" stroke="#4a0620" stroke-width="2"/>
<use href="#ctr" stroke="#ffe0f0" stroke-width="1.6" stroke-dasharray="1.2 1.6" opacity="0.85"/></g>
<circle cx="736.2" cy="263.1" r="99.0" fill="#ffff88" stroke="#1a0606" stroke-width="2.2"/>
<circle cx="736.2" cy="263.1" r="100.4" fill="none" stroke="#ffffff" stroke-width="0.9" stroke-dasharray="2.5 2.5" opacity="0.95"/>
<rect x="562" y="259.5" width="5" height="5" fill="#4a9a4a" stroke="#0a3a0a" stroke-width="1"/>
</svg></div>
<div style="position:absolute;left:9.6px;top:111.3px;font-family:'Liberation Sans',sans-serif;font-weight:bold;font-size:38px;line-height:1;white-space:nowrap;transform:rotate(-30deg);transform-origin:0 0;color:#1f1f1f;mix-blend-mode:exclusion;-webkit-text-stroke:0.45px #1f1f1f;pointer-events:none">izPPU.RU</div>
<div style="position:absolute;left:184.3px;top:112.5px;font-family:'Liberation Sans',sans-serif;font-weight:bold;font-size:38px;line-height:1;white-space:nowrap;transform:rotate(-30deg);transform-origin:0 0;color:#1f1f1f;mix-blend-mode:exclusion;-webkit-text-stroke:0.45px #1f1f1f;pointer-events:none">izPPU.RU</div>
<div style="position:absolute;left:359.0px;top:113.6px;font-family:'Liberation Sans',sans-serif;font-weight:bold;font-size:38px;line-height:1;white-space:nowrap;transform:rotate(-30deg);transform-origin:0 0;color:#1f1f1f;mix-blend-mode:exclusion;-webkit-text-stroke:0.45px #1f1f1f;pointer-events:none">izPPU.RU</div>
<div style="position:absolute;left:533.7px;top:114.8px;font-family:'Liberation Sans',sans-serif;font-weight:bold;font-size:38px;line-height:1;white-space:nowrap;transform:rotate(-30deg);transform-origin:0 0;color:#1f1f1f;mix-blend-mode:exclusion;-webkit-text-stroke:0.45px #1f1f1f;pointer-events:none">izPPU.RU</div>
<div style="position:absolute;left:708.4px;top:115.9px;font-family:'Liberation Sans',sans-serif;font-weight:bold;font-size:38px;line-height:1;white-space:nowrap;transform:rotate(-30deg);transform-origin:0 0;color:#1f1f1f;mix-blend-mode:exclusion;-webkit-text-stroke:0.45px #1f1f1f;pointer-events:none">izPPU.RU</div>
<div style="position:absolute;left:883.1px;top:117.0px;font-family:'Liberation Sans',sans-serif;font-weight:bold;font-size:38px;line-height:1;white-space:nowrap;transform:rotate(-30deg);transform-origin:0 0;color:#1f1f1f;mix-blend-mode:exclusion;-webkit-text-stroke:0.45px #1f1f1f;pointer-events:none">izPPU.RU</div>
<div style="position:absolute;left:1057.8px;top:118.2px;font-family:'Liberation Sans',sans-serif;font-weight:bold;font-size:38px;line-height:1;white-space:nowrap;transform:rotate(-30deg);transform-origin:0 0;color:#1f1f1f;mix-blend-mode:exclusion;-webkit-text-stroke:0.45px #1f1f1f;pointer-events:none">izPPU.RU</div>
<div style="position:absolute;left:9.6px;top:255.1px;font-family:'Liberation Sans',sans-serif;font-weight:bold;font-size:38px;line-height:1;white-space:nowrap;transform:rotate(-30deg);transform-origin:0 0;color:#1f1f1f;mix-blend-mode:exclusion;-webkit-text-stroke:0.45px #1f1f1f;pointer-events:none">izPPU.RU</div>
<div style="position:absolute;left:184.3px;top:256.2px;font-family:'Liberation Sans',sans-serif;font-weight:bold;font-size:38px;line-height:1;white-space:nowrap;transform:rotate(-30deg);transform-origin:0 0;color:#1f1f1f;mix-blend-mode:exclusion;-webkit-text-stroke:0.45px #1f1f1f;pointer-events:none">izPPU.RU</div>
<div style="position:absolute;left:359.0px;top:257.4px;font-family:'Liberation Sans',sans-serif;font-weight:bold;font-size:38px;line-height:1;white-space:nowrap;transform:rotate(-30deg);transform-origin:0 0;color:#1f1f1f;mix-blend-mode:exclusion;-webkit-text-stroke:0.45px #1f1f1f;pointer-events:none">izPPU.RU</div>
<div style="position:absolute;left:533.7px;top:258.6px;font-family:'Liberation Sans',sans-serif;font-weight:bold;font-size:38px;line-height:1;white-space:nowrap;transform:rotate(-30deg);transform-origin:0 0;color:#1f1f1f;mix-blend-mode:exclusion;-webkit-text-stroke:0.45px #1f1f1f;pointer-events:none">izPPU.RU</div>
<div style="position:absolute;left:708.4px;top:259.7px;font-family:'Liberation Sans',sans-serif;font-weight:bold;font-size:38px;line-height:1;white-space:nowrap;transform:rotate(-30deg);transform-origin:0 0;color:#1f1f1f;mix-blend-mode:exclusion;-webkit-text-stroke:0.45px #1f1f1f;pointer-events:none">izPPU.RU</div>
<div style="position:absolute;left:883.1px;top:260.9px;font-family:'Liberation Sans',sans-serif;font-weight:bold;font-size:38px;line-height:1;white-space:nowrap;transform:rotate(-30deg);transform-origin:0 0;color:#1f1f1f;mix-blend-mode:exclusion;-webkit-text-stroke:0.45px #1f1f1f;pointer-events:none">izPPU.RU</div>
<div style="position:absolute;left:1057.8px;top:262.0px;font-family:'Liberation Sans',sans-serif;font-weight:bold;font-size:38px;line-height:1;white-space:nowrap;transform:rotate(-30deg);transform-origin:0 0;color:#1f1f1f;mix-blend-mode:exclusion;-webkit-text-stroke:0.45px #1f1f1f;pointer-events:none">izPPU.RU</div>
<div style="position:absolute;left:9.6px;top:398.9px;font-family:'Liberation Sans',sans-serif;font-weight:bold;font-size:38px;line-height:1;white-space:nowrap;transform:rotate(-30deg);transform-origin:0 0;color:#1f1f1f;mix-blend-mode:exclusion;-webkit-text-stroke:0.45px #1f1f1f;pointer-events:none">izPPU.RU</div>
<div style="position:absolute;left:184.3px;top:400.1px;font-family:'Liberation Sans',sans-serif;font-weight:bold;font-size:38px;line-height:1;white-space:nowrap;transform:rotate(-30deg);transform-origin:0 0;color:#1f1f1f;mix-blend-mode:exclusion;-webkit-text-stroke:0.45px #1f1f1f;pointer-events:none">izPPU.RU</div>
<div style="position:absolute;left:359.0px;top:401.2px;font-family:'Liberation Sans',sans-serif;font-weight:bold;font-size:38px;line-height:1;white-space:nowrap;transform:rotate(-30deg);transform-origin:0 0;color:#1f1f1f;mix-blend-mode:exclusion;-webkit-text-stroke:0.45px #1f1f1f;pointer-events:none">izPPU.RU</div>
<div style="position:absolute;left:533.7px;top:402.4px;font-family:'Liberation Sans',sans-serif;font-weight:bold;font-size:38px;line-height:1;white-space:nowrap;transform:rotate(-30deg);transform-origin:0 0;color:#1f1f1f;mix-blend-mode:exclusion;-webkit-text-stroke:0.45px #1f1f1f;pointer-events:none">izPPU.RU</div>
<div style="position:absolute;left:708.4px;top:403.5px;font-family:'Liberation Sans',sans-serif;font-weight:bold;font-size:38px;line-height:1;white-space:nowrap;transform:rotate(-30deg);transform-origin:0 0;color:#1f1f1f;mix-blend-mode:exclusion;-webkit-text-stroke:0.45px #1f1f1f;pointer-events:none">izPPU.RU</div>
<div style="position:absolute;left:883.1px;top:404.7px;font-family:'Liberation Sans',sans-serif;font-weight:bold;font-size:38px;line-height:1;white-space:nowrap;transform:rotate(-30deg);transform-origin:0 0;color:#1f1f1f;mix-blend-mode:exclusion;-webkit-text-stroke:0.45px #1f1f1f;pointer-events:none">izPPU.RU</div>
<div style="position:absolute;left:1057.8px;top:405.8px;font-family:'Liberation Sans',sans-serif;font-weight:bold;font-size:38px;line-height:1;white-space:nowrap;transform:rotate(-30deg);transform-origin:0 0;color:#1f1f1f;mix-blend-mode:exclusion;-webkit-text-stroke:0.45px #1f1f1f;pointer-events:none">izPPU.RU</div>
<div style="position:absolute;left:9.6px;top:542.7px;font-family:'Liberation Sans',sans-serif;font-weight:bold;font-size:38px;line-height:1;white-space:nowrap;transform:rotate(-30deg);transform-origin:0 0;color:#1f1f1f;mix-blend-mode:exclusion;-webkit-text-stroke:0.45px #1f1f1f;pointer-events:none">izPPU.RU</div>
<div style="position:absolute;left:184.3px;top:543.9px;font-family:'Liberation Sans',sans-serif;font-weight:bold;font-size:38px;line-height:1;white-space:nowrap;transform:rotate(-30deg);transform-origin:0 0;color:#1f1f1f;mix-blend-mode:exclusion;-webkit-text-stroke:0.45px #1f1f1f;pointer-events:none">izPPU.RU</div>
<div style="position:absolute;left:359.0px;top:545.0px;font-family:'Liberation Sans',sans-serif;font-weight:bold;font-size:38px;line-height:1;white-space:nowrap;transform:rotate(-30deg);transform-origin:0 0;color:#1f1f1f;mix-blend-mode:exclusion;-webkit-text-stroke:0.45px #1f1f1f;pointer-events:none">izPPU.RU</div>
<div style="position:absolute;left:533.7px;top:546.2px;font-family:'Liberation Sans',sans-serif;font-weight:bold;font-size:38px;line-height:1;white-space:nowrap;transform:rotate(-30deg);transform-origin:0 0;color:#1f1f1f;mix-blend-mode:exclusion;-webkit-text-stroke:0.45px #1f1f1f;pointer-events:none">izPPU.RU</div>
<div style="position:absolute;left:708.4px;top:547.3px;font-family:'Liberation Sans',sans-serif;font-weight:bold;font-size:38px;line-height:1;white-space:nowrap;transform:rotate(-30deg);transform-origin:0 0;color:#1f1f1f;mix-blend-mode:exclusion;-webkit-text-stroke:0.45px #1f1f1f;pointer-events:none">izPPU.RU</div>
<div style="position:absolute;left:883.1px;top:548.5px;font-family:'Liberation Sans',sans-serif;font-weight:bold;font-size:38px;line-height:1;white-space:nowrap;transform:rotate(-30deg);transform-origin:0 0;color:#1f1f1f;mix-blend-mode:exclusion;-webkit-text-stroke:0.45px #1f1f1f;pointer-events:none">izPPU.RU</div>
<div style="position:absolute;left:1057.8px;top:549.6px;font-family:'Liberation Sans',sans-serif;font-weight:bold;font-size:38px;line-height:1;white-space:nowrap;transform:rotate(-30deg);transform-origin:0 0;color:#1f1f1f;mix-blend-mode:exclusion;-webkit-text-stroke:0.45px #1f1f1f;pointer-events:none">izPPU.RU</div>
<div style="position:absolute;left:9.6px;top:686.5px;font-family:'Liberation Sans',sans-serif;font-weight:bold;font-size:38px;line-height:1;white-space:nowrap;transform:rotate(-30deg);transform-origin:0 0;color:#1f1f1f;mix-blend-mode:exclusion;-webkit-text-stroke:0.45px #1f1f1f;pointer-events:none">izPPU.RU</div>
<div style="position:absolute;left:184.3px;top:687.7px;font-family:'Liberation Sans',sans-serif;font-weight:bold;font-size:38px;line-height:1;white-space:nowrap;transform:rotate(-30deg);transform-origin:0 0;color:#1f1f1f;mix-blend-mode:exclusion;-webkit-text-stroke:0.45px #1f1f1f;pointer-events:none">izPPU.RU</div>
<div style="position:absolute;left:359.0px;top:688.8px;font-family:'Liberation Sans',sans-serif;font-weight:bold;font-size:38px;line-height:1;white-space:nowrap;transform:rotate(-30deg);transform-origin:0 0;color:#1f1f1f;mix-blend-mode:exclusion;-webkit-text-stroke:0.45px #1f1f1f;pointer-events:none">izPPU.RU</div>
<div style="position:absolute;left:533.7px;top:690.0px;font-family:'Liberation Sans',sans-serif;font-weight:bold;font-size:38px;line-height:1;white-space:nowrap;transform:rotate(-30deg);transform-origin:0 0;color:#1f1f1f;mix-blend-mode:exclusion;-webkit-text-stroke:0.45px #1f1f1f;pointer-events:none">izPPU.RU</div>
<div style="position:absolute;left:708.4px;top:691.1px;font-family:'Liberation Sans',sans-serif;font-weight:bold;font-size:38px;line-height:1;white-space:nowrap;transform:rotate(-30deg);transform-origin:0 0;color:#1f1f1f;mix-blend-mode:exclusion;-webkit-text-stroke:0.45px #1f1f1f;pointer-events:none">izPPU.RU</div>
<div style="position:absolute;left:883.1px;top:692.2px;font-family:'Liberation Sans',sans-serif;font-weight:bold;font-size:38px;line-height:1;white-space:nowrap;transform:rotate(-30deg);transform-origin:0 0;color:#1f1f1f;mix-blend-mode:exclusion;-webkit-text-stroke:0.45px #1f1f1f;pointer-events:none">izPPU.RU</div>
<div style="position:absolute;left:1057.8px;top:693.4px;font-family:'Liberation Sans',sans-serif;font-weight:bold;font-size:38px;line-height:1;white-space:nowrap;transform:rotate(-30deg);transform-origin:0 0;color:#1f1f1f;mix-blend-mode:exclusion;-webkit-text-stroke:0.45px #1f1f1f;pointer-events:none">izPPU.RU</div>
</body></html>
